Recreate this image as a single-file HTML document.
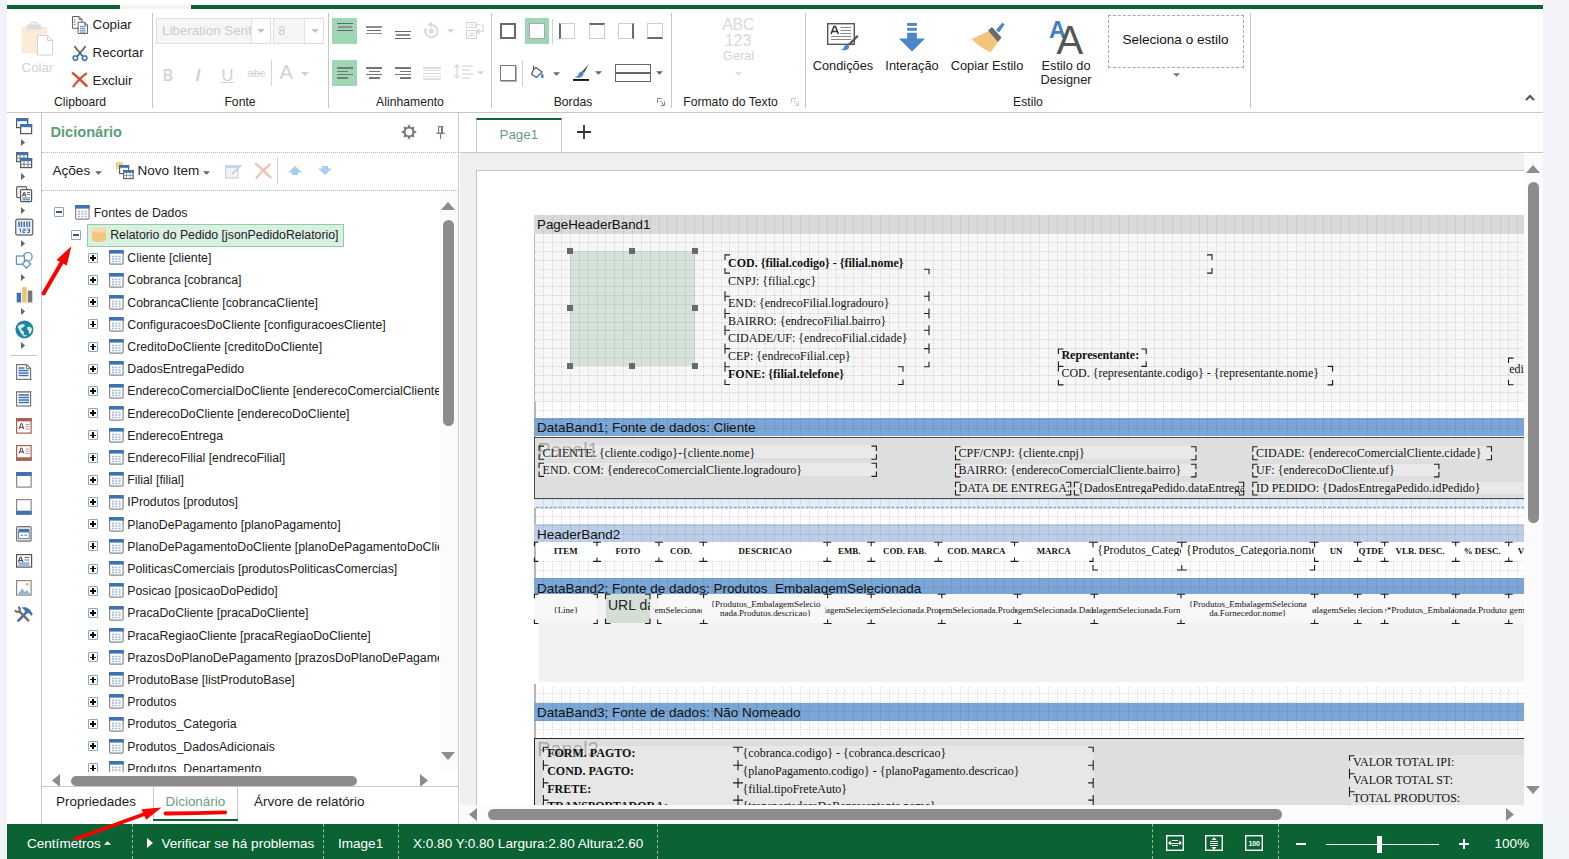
<!DOCTYPE html>
<html lang="pt-BR"><head><meta charset="utf-8"><title>Designer</title>
<style>
*{box-sizing:border-box}
html,body{margin:0;padding:0}
body{width:1569px;height:859px;position:relative;overflow:hidden;background:#f1f3f8;font-family:"Liberation Sans",sans-serif;color:#222;font-size:13.33px}
.a{position:absolute}
.t{position:absolute;white-space:pre;line-height:1}
.c{transform:translateX(-50%)}
svg{position:absolute;overflow:visible}
.sep{position:absolute;width:1px;background:#c6c6c6;top:13px;height:95px}
.gl{position:absolute;white-space:pre;font-size:12.2px;line-height:12px;top:95.6px;transform:translateX(-50%);color:#222}
.rb{position:absolute;white-space:pre;font-size:13.33px;line-height:14px;color:#222}
.tr{position:absolute;white-space:pre;font-size:12.3px;line-height:14px;color:#222}
.st{position:absolute;white-space:pre;font-size:13.55px;line-height:14px;color:#fff;top:836.5px}
.sv{position:absolute;top:824px;height:35px;width:0;border-left:1px dashed rgba(255,255,255,.55)}
.rt{position:absolute;white-space:pre;font-family:"Liberation Serif",serif;font-size:11.93px;line-height:12px;color:#111}
.bh{position:absolute;left:534px;width:1000px;white-space:pre;font-size:13.5px;line-height:18px;padding-left:3px;padding-top:1.2px;color:#111;overflow:hidden}
</style></head><body>
<div class="a" style="left:7px;top:0;width:1536px;height:859px;background:#fff"></div><div class="a" style="left:7px;top:5px;width:113px;height:4px;background:#0b6333"></div><div class="a" style="left:191px;top:5px;width:1352px;height:4px;background:#0b6333"></div><div class="a" style="left:120px;top:5px;width:71px;height:4px;background:#f4f4f4"></div><div class="a" style="left:7px;top:112px;width:1536px;height:1px;background:#c8c8c8"></div>
<!-- s_ribbon -->
<svg style="left:21px;top:22px" width="33" height="34" viewBox="0 0 33 34">
<rect x="0.5" y="4.5" width="26" height="27" rx="1.5" fill="#fbebd8"/>
<rect x="6" y="2.5" width="14" height="5" rx="1" fill="#dcdcdc"/><rect x="10" y="0.5" width="6" height="4" rx="1.5" fill="none" stroke="#dcdcdc" stroke-width="1.6"/>
<path d="M16.5 13.5h10l5 5v14.5h-15z" fill="#fff" stroke="#d2d2d6" stroke-width="1"/><path d="M26.5 13.5v5h5" fill="none" stroke="#d2d2d6"/>
</svg>
<div class="rb c" style="left:37.5px;top:61px;color:#d6d0d8">Colar</div>
<svg style="left:72px;top:15.500px" width="16" height="18" viewBox="0 0 17 19">
<path d="M0.5 0.5h7l3 3v9.5h-10z" fill="#fff" stroke="#555"/><path d="M7.5 0.5v3h3" fill="none" stroke="#555"/>
<path d="M2 4h1.5M2 6.5h1.5M2 9h1.5" stroke="#4a7ebb" stroke-width="1.2"/>
<path d="M6.5 6.5h7l3 3v9h-10z" fill="#fff" stroke="#555"/><path d="M13.5 6.5v3h3" fill="none" stroke="#555"/>
<path d="M8.5 11h6M8.5 13h6M8.5 15h6M8.5 17h6" stroke="#4a7ebb" stroke-width="1"/>
</svg>
<div class="rb" style="left:92.500px;top:17.500px">Copiar</div>
<svg style="left:72px;top:45.500px" width="16" height="15.500" viewBox="0 0 17 16">
<path d="M3 0.5L11.5 11M14 0.5L5.5 11" stroke="#5a5a5a" stroke-width="1.8" fill="none" stroke-linecap="round"/>
<circle cx="3.6" cy="12.6" r="2.4" fill="none" stroke="#3f7fc4" stroke-width="1.8"/><circle cx="13.4" cy="12.6" r="2.4" fill="none" stroke="#3f7fc4" stroke-width="1.8"/>
</svg>
<div class="rb" style="left:92.500px;top:45.500px">Recortar</div>
<svg style="left:72px;top:72.300px" width="16" height="15.500" viewBox="0 0 17 16">
<path d="M1 1C5 4 10 9 15.5 14.5" stroke="#d4502f" stroke-width="2.6" fill="none" stroke-linecap="round"/>
<path d="M15 1.5C10 5 5 10 1.5 15" stroke="#d4502f" stroke-width="2.4" fill="none" stroke-linecap="round"/>
</svg>
<div class="rb" style="left:92.500px;top:73.500px">Excluir</div>
<div class="gl" style="left:80px">Clipboard</div>
<div class="sep" style="left:152px"></div>
<div class="a" style="left:156px;top:18px;width:115px;height:26px;border:1px solid #dedede;background:#fff"></div>
<div class="a" style="left:157px;top:19px;width:95px;height:24px;background:#f6f6f6;border-right:1px solid #e2e2e2;overflow:hidden"><div class="rb" style="left:5px;top:4.600px;color:#cbcbcb">Liberation Serif</div></div>
<svg style="left:257px;top:29px" width="8" height="4" viewBox="0 0 8 4"><path d="M0 0h8l-4 4z" fill="#c4c4c4"/></svg>
<div class="a" style="left:272.800px;top:18px;width:51px;height:26px;border:1px solid #dedede;background:#fff"></div>
<div class="a" style="left:273.800px;top:19px;width:31px;height:24px;background:#f6f6f6;border-right:1px solid #e2e2e2;overflow:hidden"><div class="rb" style="left:4.500px;top:4.600px;color:#cbcbcb">8</div></div>
<svg style="left:310.5px;top:29px" width="8" height="4" viewBox="0 0 8 4"><path d="M0 0h8l-4 4z" fill="#c4c4c4"/></svg>
<div class="t" style="left:162.500px;top:65.300px;font:bold 17.400px 'Liberation Sans',sans-serif;color:#d4d4d4;transform:scaleX(.8);transform-origin:left">B</div>
<div class="t" style="left:195.500px;top:65.300px;font:italic bold 17.400px 'Liberation Sans',sans-serif;color:#d4d4d4">I</div>
<div class="t" style="left:221.500px;top:65.500px;font:16.500px 'Liberation Sans',sans-serif;color:#d2d2d2;text-decoration:underline">U</div>
<div class="t" style="left:247.5px;top:67px;font:11px 'Liberation Sans',sans-serif;color:#d2d2d2;text-decoration:line-through">abc</div>
<div class="a" style="left:271px;top:60px;width:1px;height:26px;background:#d4d4d4"></div>
<div class="t" style="left:279.5px;top:61px;font:20px 'Liberation Sans',sans-serif;color:#d2d2d2">A</div>
<svg style="left:300.5px;top:72px" width="8" height="4" viewBox="0 0 8 4"><path d="M0 0h8l-4 4z" fill="#d0d0d0"/></svg>
<div class="gl" style="left:240px">Fonte</div>
<div class="sep" style="left:328px"></div>
<div class="a" style="left:332px;top:18px;width:25px;height:26px;background:#9fd6b4"></div>
<div class="a" style="left:332px;top:60px;width:25px;height:26px;background:#9fd6b4"></div>
<div class="a" style="left:337.0px;top:22.9px;width:16px;height:1.400px;background:#666"></div><div class="a" style="left:338.2px;top:26.3px;width:13.5px;height:1.400px;background:#8e8e8e"></div><div class="a" style="left:337.0px;top:29.6px;width:16px;height:1.400px;background:#666"></div>
<div class="a" style="left:366.0px;top:26.3px;width:16px;height:1.400px;background:#8e8e8e"></div><div class="a" style="left:366.8px;top:29.6px;width:14.5px;height:1.400px;background:#666"></div><div class="a" style="left:366.0px;top:33.0px;width:16px;height:1.400px;background:#8e8e8e"></div>
<div class="a" style="left:395.0px;top:30.8px;width:16px;height:1.400px;background:#666"></div><div class="a" style="left:396.2px;top:34.3px;width:13.5px;height:1.400px;background:#8e8e8e"></div><div class="a" style="left:395.0px;top:37.6px;width:16px;height:1.400px;background:#666"></div>
<svg style="left:423px;top:21px" width="17" height="18" viewBox="0 0 17 18"><path d="M8.300 3.800A6.200 6.200 0 1 1 2.600 7.500" fill="none" stroke="#cbdbea" stroke-width="1.800"/><path d="M4.500 3.500L9 0.500v6z" fill="#cbdbea"/><circle cx="8.300" cy="10" r="2.600" fill="#cde3d4"/><path d="M1 8.500h3M1 11h2.500" stroke="#cbdbea" stroke-width="1"/></svg>
<svg style="left:447px;top:29px" width="7" height="4" viewBox="0 0 8 4"><path d="M0 0h8l-4 4z" fill="#d0d0d0"/></svg>
<svg style="left:466px;top:22px" width="18" height="17" viewBox="0 0 18 17"><rect x="0.500" y="0.500" width="10" height="5" fill="#fff" stroke="#d6d6d6"/><rect x="0.500" y="8.500" width="10" height="8" fill="#fff" stroke="#d6d6d6"/><path d="M2.500 3h12M2.500 11.500h6M2.500 13.500h6" stroke="#c9dbee" stroke-width="1"/><path d="M15.500 3h1.500v6.500h-5" fill="none" stroke="#c9dbee" stroke-width="1.200"/><path d="M14 7l-3 2.500 3 2.500" fill="none" stroke="#c9dbee" stroke-width="1.200"/></svg>
<div class="a" style="left:337.0px;top:67.2px;width:16px;height:1.400px;background:#6f7f75"></div><div class="a" style="left:337.0px;top:70.6px;width:11px;height:1.400px;background:#6f7f75"></div><div class="a" style="left:337.0px;top:73.9px;width:16px;height:1.400px;background:#6f7f75"></div><div class="a" style="left:337.0px;top:77.3px;width:11px;height:1.400px;background:#6f7f75"></div>
<div class="a" style="left:366.0px;top:67.2px;width:16px;height:1.400px;background:#777"></div><div class="a" style="left:368.5px;top:70.6px;width:11px;height:1.400px;background:#777"></div><div class="a" style="left:366.0px;top:73.9px;width:16px;height:1.400px;background:#777"></div><div class="a" style="left:368.5px;top:77.3px;width:11px;height:1.400px;background:#777"></div>
<div class="a" style="left:395.0px;top:67.2px;width:16px;height:1.400px;background:#777"></div><div class="a" style="left:400.0px;top:70.6px;width:11px;height:1.400px;background:#777"></div><div class="a" style="left:395.0px;top:73.9px;width:16px;height:1.400px;background:#777"></div><div class="a" style="left:400.0px;top:77.3px;width:11px;height:1.400px;background:#777"></div>
<div class="a" style="left:423px;top:67.1px;width:18px;height:1.600px;background:#e0e0e0"></div><div class="a" style="left:423px;top:69.9px;width:18px;height:1.600px;background:#e0e0e0"></div><div class="a" style="left:423px;top:72.7px;width:18px;height:1.600px;background:#e0e0e0"></div><div class="a" style="left:423px;top:75.5px;width:18px;height:1.600px;background:#e0e0e0"></div><div class="a" style="left:423px;top:78.3px;width:18px;height:1.600px;background:#e0e0e0"></div>
<svg style="left:454px;top:64px" width="20" height="16" viewBox="0 0 20 16"><path d="M3 1v13M0.5 3.5L3 1l2.5 2.5M0.5 11.5L3 14l2.5-2.5" fill="none" stroke="#cddcec" stroke-width="1.300"/><path d="M8 2h11M8 6h8M8 10h11M8 14h8" stroke="#e0e0e0" stroke-width="1.400"/></svg>
<svg style="left:476.5px;top:71px" width="7" height="4" viewBox="0 0 8 4"><path d="M0 0h8l-4 4z" fill="#d6d6d6"/></svg>
<div class="gl" style="left:410px">Alinhamento</div>
<div class="sep" style="left:491px"></div>
<div class="a" style="left:500px;top:23px;width:16px;height:16px;border:2.300px solid #686868;background:#fff"></div>
<div class="a" style="left:525px;top:18px;width:24px;height:26px;background:#9fd6b4"></div>
<div class="a" style="left:529px;top:23px;width:16px;height:16px;border:1.500px solid #a9a9a9;background:#fbfbfb"></div>
<div class="a" style="left:552px;top:19px;width:1px;height:25px;background:#d0d0d0"></div>
<div class="a" style="left:559px;top:23px;width:16px;height:16px;border:1px solid #cdcdcd;border-left:2.300px solid #6a6a6a;background:#fff"></div>
<div class="a" style="left:589px;top:23px;width:16px;height:16px;border:1px solid #cdcdcd;border-top:2.300px solid #6a6a6a;background:#fff"></div>
<div class="a" style="left:618px;top:23px;width:16px;height:16px;border:1px solid #cdcdcd;border-right:2.300px solid #6a6a6a;background:#fff"></div>
<div class="a" style="left:647px;top:23px;width:16px;height:16px;border:1px solid #cdcdcd;border-bottom:2.300px solid #6a6a6a;background:#fff"></div>
<div class="a" style="left:500px;top:65px;width:16px;height:16px;border:1.800px solid #787878;background:#fff;box-shadow:1px 1px 0 #b5b5b5"></div>
<div class="a" style="left:522px;top:60px;width:1px;height:26px;background:#d0d0d0"></div>
<svg style="left:530px;top:64px" width="15" height="15" viewBox="0 0 15 15"><path d="M3.5 1.5v4M3.5 5.5l-2 4.5 5 3.5 5.5-5.5-6-4.5z" fill="#fff" stroke="#555" stroke-width="1.1" stroke-linejoin="round"/><path d="M12.2 9c1 1.6 1.6 2.6 1.6 3.4a1.5 1.5 0 0 1-3 0c0-.8.5-1.8 1.4-3.4z" fill="#4a86c8"/></svg>
<svg style="left:552.500px;top:71.500px" width="7" height="4" viewBox="0 0 8 4"><path d="M0 0h8l-4 4z" fill="#666"/></svg>
<svg style="left:573px;top:63px" width="17" height="19" viewBox="0 0 17 19"><path d="M16 1L9 8.5l2 1.5z" fill="#555"/><path d="M8.5 8.5c-2 .5-3 2-3.5 4-.6 1-2 1.6-3.6 1.4 3 1.6 6.6 1 8.6-1.4.9-1.2.6-2.6-.2-3.400z" fill="#4a86c8"/><rect x="0" y="16" width="16" height="1.900" fill="#111"/></svg>
<svg style="left:594.5px;top:71px" width="7" height="4" viewBox="0 0 8 4"><path d="M0 0h8l-4 4z" fill="#666"/></svg>
<div class="a" style="left:615px;top:64px;width:36px;height:18px;border:1.4px solid #666;background:#fff"></div>
<div class="a" style="left:615px;top:72.3px;width:36px;height:1.4px;background:#666"></div>
<svg style="left:656px;top:71px" width="7" height="4" viewBox="0 0 8 4"><path d="M0 0h8l-4 4z" fill="#666"/></svg>
<div class="gl" style="left:573px">Bordas</div>
<svg style="left:657px;top:98px" width="8" height="8" viewBox="0 0 8 8"><path d="M0.5 5V0.5H5" fill="none" stroke="#888"/><path d="M3 3l4 4M7.5 3.5v4h-4" fill="none" stroke="#888"/></svg>
<div class="sep" style="left:671px"></div>
<div class="t c" style="left:738px;top:17.300px;font-size:16px;color:#dadada;letter-spacing:-.4px">ABC</div>
<div class="t c" style="left:738px;top:33px;font-size:16px;color:#dadada">123</div>
<div class="t c" style="left:738.500px;top:50px;font-size:12.800px;color:#d4d4d8">Geral</div>
<svg style="left:734.5px;top:72px" width="7" height="4" viewBox="0 0 8 4"><path d="M0 0h8l-4 4z" fill="#dcdcdc"/></svg>
<div class="gl" style="left:730.5px">Formato do Texto</div>
<svg style="left:790.5px;top:98px" width="8" height="8" viewBox="0 0 8 8"><path d="M0.5 5V0.5H5" fill="none" stroke="#ccc"/><path d="M3 3l4 4M7.5 3.5v4h-4" fill="none" stroke="#ccc"/></svg>
<div class="sep" style="left:805px"></div>
<svg style="left:827px;top:23px" width="32" height="29" viewBox="0 0 32 29">
<rect x="0.7" y="0.7" width="26.6" height="20.6" fill="#fff" stroke="#555" stroke-width="1.4"/>
<path d="M4 11L7 3.500h1.400L11.400 11M5 8.500h5.400" fill="none" stroke="#333" stroke-width="1.5"/>
<path d="M13.500 4.500h10.500M13.500 7.500h10.500M13.500 10.500h10.500M4 13.500h20M4 16.500h20" stroke="#8a8a8a" stroke-width="1.2"/>
<path d="M30 12l1.600 1.600-8.600 9-2-1.600z" fill="#555"/>
<path d="M20.500 21.500c-2 .2-3.400 1.400-3.800 3.200-.4 1.200-1.800 1.800-3.400 1.600 3.200 1.800 7 1.200 8.600-1.400.8-1.200.2-2.600-1.400-3.400z" fill="#4a86c8"/>
</svg>
<div class="rb c" style="left:843px;top:58.500px;font-size:12.800px">Condições</div>
<svg style="left:898px;top:23.200px" width="28" height="29" viewBox="0 0 28 30">
<rect x="9" y="0" width="10" height="3" fill="#4a86c8"/><rect x="9" y="5" width="10" height="3" fill="#4a86c8"/>
<path d="M9 10h10v6h8.500L14 29.500 0.500 16H9z" fill="#4a86c8"/></svg>
<div class="rb c" style="left:912px;top:58.500px;font-size:12.800px">Interação</div>
<svg style="left:971px;top:22px" width="34" height="31" viewBox="0 0 34 31">
<path d="M0.500 17L18 9l9 11-7.500 10.500C13 27 6 23 0.500 17z" fill="#f2c57c"/>
<path d="M17 8.500l4-3.500 9.500 10.500-3.500 4.500z" fill="#6a6a6a"/>
<path d="M25 8l6.500-7.500 2 2L28 10.500z" fill="#4a86c8"/></svg>
<div class="rb c" style="left:987px;top:58.500px;font-size:12.800px">Copiar Estilo</div>
<div class="t" style="left:1049px;top:19.300px;font-size:23.500px;color:#3f7fc4;font-weight:bold">A</div>
<div class="t" style="left:1056.500px;top:19.500px;font-size:40px;color:#555">A</div>
<div class="rb c" style="left:1066px;top:58.500px;text-align:center;line-height:14px;font-size:12.800px">Estilo do
Designer</div>
<div class="a" style="left:1108px;top:15px;width:136px;height:53px;border:1px dashed #a8a8a8"></div>
<div class="rb c" style="left:1175.500px;top:33.400px;color:#111;font-size:13.560px">Seleciona o estilo</div>
<svg style="left:1172.500px;top:73px" width="7" height="4" viewBox="0 0 8 4"><path d="M0 0h8l-4 4z" fill="#777"/></svg>
<div class="gl" style="left:1028px">Estilo</div>
<div class="sep" style="left:1250px"></div>
<svg style="left:1525px;top:94px" width="10" height="7" viewBox="0 0 10 7"><path d="M1 6l4-4 4 4" fill="none" stroke="#555" stroke-width="2"/></svg>
<!-- s_left -->
<div class="a" style="left:40.5px;top:113px;width:1px;height:711px;background:#c8c8c8"></div>
<svg style="left:15.500px;top:117.5px" width="17" height="17" viewBox="0 0 17 17"><rect x="0.6" y="0.6" width="11" height="9" fill="#fff" stroke="#555" stroke-width="1.2"/><rect x="0" y="0" width="12.2" height="3.2" fill="#3f72b0"/><rect x="4.600" y="6.600" width="11" height="9" fill="#fff" stroke="#555" stroke-width="1.2"/><rect x="4" y="6" width="12.2" height="3.2" fill="#3f72b0"/></svg>
<svg style="left:21px;top:139.0px" width="4" height="7" viewBox="0 0 4 7"><path d="M0 0l4 3.500-4 3.500z" fill="#666"/></svg>
<svg style="left:15.500px;top:151.5px" width="17" height="17" viewBox="0 0 17 17"><rect x="0.6" y="0.6" width="11" height="9" fill="#fff" stroke="#555" stroke-width="1.2"/><rect x="0" y="0" width="12.2" height="3.2" fill="#3f72b0"/><path d="M0 6h12M4 3v7M8 3v7" stroke="#777" stroke-width=".9"/><rect x="4.600" y="6.600" width="11" height="9" fill="#fff" stroke="#555" stroke-width="1.2"/><rect x="4" y="6" width="12.2" height="3.2" fill="#3f72b0"/><path d="M4 12.300h12M8 9v7M12 9v7" stroke="#777" stroke-width=".9"/></svg>
<svg style="left:21px;top:172.8px" width="4" height="7" viewBox="0 0 4 7"><path d="M0 0l4 3.500-4 3.500z" fill="#666"/></svg>
<svg style="left:15.500px;top:185.5px" width="17" height="17" viewBox="0 0 17 17"><rect x="0.6" y="0.6" width="10" height="11" rx="1" fill="#eee" stroke="#666" stroke-width="1.2"/><rect x="4.600" y="3.600" width="11" height="12" rx="1" fill="#fff" stroke="#555" stroke-width="1.2"/><path d="M6.500 10.500l1.300-4h.9l1.300 4M7 9h2.400" stroke="#333" stroke-width=".9" fill="none"/><path d="M11 6.500h3M11 8.500h3M6.500 12h7.500M6.500 13.800h7.500" stroke="#3f72b0" stroke-width="1"/></svg>
<svg style="left:21px;top:206.6px" width="4" height="7" viewBox="0 0 4 7"><path d="M0 0l4 3.500-4 3.500z" fill="#666"/></svg>
<svg style="left:15.500px;top:217.8px" width="17" height="17" viewBox="0 0 17 17"><rect x="-0.300" y="1.200" width="17" height="15.800" rx="1.800" fill="#edf2f9" stroke="#777" stroke-width="1.400"/><path d="M3 3.500v5.500M5.500 3.500v5.500M8.200 3.500v5.500M11 3.500v5.500M13.500 3.500v5.500" stroke="#3f72b0" stroke-width="1.500"/><path d="M3 11h1.500v3.500M6.800 11h2.400v1.700H6.800v1.800h2.400M11.200 11h2.300v3.500h-2.300M11.500 12.700h2" stroke="#3f72b0" stroke-width="1" fill="none"/></svg>
<svg style="left:21px;top:240.4px" width="4" height="7" viewBox="0 0 4 7"><path d="M0 0l4 3.500-4 3.500z" fill="#666"/></svg>
<svg style="left:15.500px;top:251px" width="17" height="17" viewBox="0 0 17 17"><circle cx="11.800" cy="5.800" r="4.300" fill="#fff" stroke="#5b8fc7" stroke-width="1.200"/><rect x="0.400" y="5" width="8" height="8.300" fill="#fff" stroke="#5b8fc7" stroke-width="1.200"/><path d="M10.500 8.800l4.200 4.200-4.200 4.200-4.200-4.200z" fill="#fff" stroke="#5b8fc7" stroke-width="1.200"/></svg>
<svg style="left:21px;top:274.2px" width="4" height="7" viewBox="0 0 4 7"><path d="M0 0l4 3.500-4 3.500z" fill="#666"/></svg>
<svg style="left:15.500px;top:287px" width="17" height="17" viewBox="0 0 17 17"><rect x="0.700" y="5.800" width="4.400" height="9.600" fill="#3f72b0"/><rect x="6.200" y="0.100" width="4.500" height="15.300" fill="#efc270"/><rect x="11.800" y="3.600" width="4.500" height="11.800" fill="#777"/></svg>
<svg style="left:21px;top:308.0px" width="4" height="7" viewBox="0 0 4 7"><path d="M0 0l4 3.500-4 3.500z" fill="#666"/></svg>
<svg style="left:15.500px;top:320.5px" width="17" height="17" viewBox="0 0 17 17"><circle cx="8.400" cy="8.400" r="9" fill="#1c86a4"/><path d="M2.500 4.500c2.500-1.500 5-2 6-1s-.5 2.800-2.200 3.300-1 2.700.500 3.200 1.700 2.300.6 4c-2.200-.6-3.300-2.800-3.800-4.400S.8 6 2.500 4.500z" fill="#d8eee6"/><path d="M11.500 6c1.700-.6 3.500 0 4.500 1.700 0 2.300-1.200 4.500-2.800 5.600-.6-1.200 0-2.300-.6-3.400s-2.200-2.200-1.100-3.900z" fill="#d8eee6"/><path d="M6 14.500c1.500-.5 3.500-.8 5 0-1.500 1.200-3.500 1.200-5 0z" fill="#d8eee6"/></svg>
<svg style="left:21px;top:341.8px" width="4" height="7" viewBox="0 0 4 7"><path d="M0 0l4 3.500-4 3.500z" fill="#666"/></svg>
<div class="a" style="left:10px;top:355px;width:27px;height:1px;background:#c8c8c8"></div>
<svg style="left:16px;top:364px" width="16" height="16" viewBox="0 0 16 16"><path d="M0.600 0.600h10l4 4v10.800h-14z" fill="#fff" stroke="#777" stroke-width="1.200"/><path d="M10.500 0.600v4h4" fill="none" stroke="#777"/><path d="M2.500 4h6M2.500 6.500h10M2.500 9h10M2.500 11.500h10" stroke="#3f72b0" stroke-width="1.300"/><path d="M0 15.500h15.500" stroke="#777" stroke-dasharray="1.500 1"/></svg>
<svg style="left:16px;top:391px" width="16" height="16" viewBox="0 0 16 16"><rect x="0.600" y="1" width="14" height="14" fill="#fff" stroke="#777" stroke-width="1.200"/><path d="M0 0.600h15.500" stroke="#777" stroke-dasharray="1.500 1"/><path d="M2.500 4h10.500M2.500 6.500h10.500M2.500 9h10.500M2.500 11.500h10.500" stroke="#3f72b0" stroke-width="1.300"/></svg>
<svg style="left:16px;top:418px" width="16" height="16" viewBox="0 0 16 16"><rect x="0.600" y="0.600" width="14.500" height="14.500" fill="#fff" stroke="#a9604f" stroke-width="1.200"/><rect x="0" y="0" width="15.700" height="3.400" fill="#a9604f"/><path d="M3 11l2-5.500h.8L7.800 11M3.600 9.300h3.500" stroke="#444" stroke-width="1" fill="none"/><path d="M9.500 6.500h4M9.500 8.700h4M9.500 11h4" stroke="#c9938c" stroke-width="1"/></svg>
<svg style="left:16px;top:445px" width="16" height="16" viewBox="0 0 16 16"><rect x="0.600" y="0.600" width="14.500" height="14.500" fill="#fff" stroke="#a9604f" stroke-width="1.200"/><rect x="0" y="12.300" width="15.700" height="3.400" fill="#a9604f"/><path d="M3 8.500l2-5.500h.8L7.800 8.500M3.600 6.800h3.500" stroke="#444" stroke-width="1" fill="none"/><path d="M9.500 4h4M9.500 6.200h4M9.500 8.500h4" stroke="#c9938c" stroke-width="1"/></svg>
<svg style="left:16px;top:472px" width="16" height="16" viewBox="0 0 16 16"><rect x="0.600" y="0.600" width="14.500" height="14.500" fill="#fff" stroke="#888" stroke-width="1.200"/><rect x="0" y="0" width="15.700" height="4" fill="#3f72b0"/></svg>
<svg style="left:16px;top:499px" width="16" height="16" viewBox="0 0 16 16"><rect x="0.600" y="0.600" width="14.500" height="14.500" fill="#fff" stroke="#888" stroke-width="1.200"/><rect x="0" y="11.700" width="15.700" height="4" fill="#3f72b0"/></svg>
<svg style="left:16px;top:526px" width="16" height="16" viewBox="0 0 16 16"><rect x="0.600" y="0.600" width="14.500" height="14.500" rx="1" fill="#e4e4e4" stroke="#777" stroke-width="1.200"/><rect x="2.500" y="3" width="10.700" height="3" fill="#3f72b0"/><rect x="2.500" y="6" width="10.700" height="6.500" fill="#fff" stroke="#3f72b0" stroke-width=".8"/><path d="M4.500 9.200h2.500M8.500 9.200h2.500" stroke="#3f72b0"/></svg>
<svg style="left:16px;top:553px" width="16" height="16" viewBox="0 0 16 16"><rect x="0.600" y="1.600" width="15" height="12.500" fill="#fff" stroke="#555" stroke-width="1.200"/><path d="M2.500 9l1.800-5h.8l1.800 5M3 7.400h3.400" stroke="#333" stroke-width="1" fill="none"/><path d="M8.500 4.500h5M8.500 7h5M2.500 10h11M2.500 12h11" stroke="#3f72b0" stroke-width="1.100"/></svg>
<svg style="left:16px;top:580px" width="16" height="16" viewBox="0 0 16 16"><rect x="0.600" y="0.600" width="14.500" height="14.500" fill="#fff" stroke="#888" stroke-width="1.200"/><path d="M1.500 14.500l4.500-6 3 3.500 2-2 3.500 4.500z" fill="#8fb4dc"/><circle cx="11.300" cy="4.300" r="1.700" fill="#efc270"/></svg>
<svg style="left:10px;top:600px" width="30" height="30" viewBox="0 0 30 30"><path d="M8.400 20.600L14.500 14.500" stroke="#3f72b0" stroke-width="2.700" stroke-linecap="round"/><path d="M11.900 7.300L16 7.300L20 9.800L22.800 14L21.300 15.900L19.300 13.300L17 13.500L15.200 15.200L13.700 13.700L15 11.600L14 9.300L12.500 8.500z" fill="#3f72b0"/><path d="M9.300 11.300L18.300 20.300" stroke="#707070" stroke-width="2.500" stroke-linecap="round"/><path d="M7.900 7.300A2.300 2.300 0 1 1 5.300 9.900" fill="none" stroke="#707070" stroke-width="2"/></svg>
<div class="a" style="left:458px;top:113px;width:1px;height:711px;background:#cdcdcd"></div>
<div class="t" style="left:50.500px;top:124.500px;font-size:14.600px;font-weight:bold;color:#5d9d7c">Dicionário</div>
<svg style="left:0;top:0" width="460" height="200" viewBox="0 0 460 200"><path d="M409.00 124.20L410.91 127.38L414.52 126.48L413.62 130.09L416.80 132.00L413.62 133.91L414.52 137.52L410.91 136.62L409.00 139.80L407.09 136.62L403.48 137.52L404.38 133.91L401.20 132.00L404.38 130.09L403.48 126.48L407.09 127.38zM412.400 132a3.400 3.400 0 1 0 -6.800 0a3.400 3.400 0 1 0 6.800 0z" fill="#757575" fill-rule="evenodd"/></svg>
<svg style="left:436px;top:126px" width="9" height="13" viewBox="0 0 9 13"><path d="M2.200 0.600h4.800M2.600 0.600v6.500M6.200 0.600v6.500" fill="none" stroke="#777" stroke-width="1.100"/><rect x="5" y="0.600" width="1.800" height="6.500" fill="#777"/><path d="M0.400 7.300h8.300" stroke="#777" stroke-width="1.300"/><path d="M4.500 7.500v5.500" stroke="#777" stroke-width="1.100"/></svg>
<div class="a" style="left:42px;top:152px;width:416px;height:0;border-top:1px dotted #b8b8b8"></div>
<div class="a" style="left:42px;top:190px;width:416px;height:0;border-top:1px dotted #b8b8b8"></div>
<div class="rb" style="left:52.500px;top:164px;font-size:13.550px">Ações</div>
<svg style="left:95px;top:170.500px" width="7" height="4" viewBox="0 0 8 4"><path d="M0 0h8l-4 4z" fill="#666"/></svg>
<svg style="left:116px;top:162px" width="18" height="17" viewBox="0 0 18 17"><rect x="0" y="0" width="7" height="7" fill="#f3cf8a"/><rect x="3.600" y="3.600" width="9" height="8" fill="#fff" stroke="#555" stroke-width="1.100"/><rect x="3" y="3" width="10.200" height="2.800" fill="#3f72b0"/><rect x="7.600" y="8.600" width="9.500" height="8" fill="#fff" stroke="#555" stroke-width="1.100"/><rect x="7" y="8" width="10.700" height="2.800" fill="#3f72b0"/><path d="M7 13.500h10.500M10.500 11v6M14 11v6" stroke="#888" stroke-width=".8"/></svg>
<div class="rb" style="left:137.500px;top:164px;font-size:13.550px">Novo Item</div>
<svg style="left:203px;top:170.500px" width="7" height="4" viewBox="0 0 8 4"><path d="M0 0h8l-4 4z" fill="#666"/></svg>
<svg style="left:225px;top:163px" width="17" height="16" viewBox="0 0 17 16"><rect x="0.600" y="2.600" width="12.500" height="12.500" fill="#eef2f7" stroke="#cfd6df" stroke-width="1.200"/><path d="M0 2h13.700v3H0z" fill="#c3d5ea"/><path d="M15.500 1.500l1.200 1.200-8 8.300-2.200.9.800-2.200z" fill="#c9cfd8"/></svg>
<svg style="left:255px;top:163px" width="17" height="16" viewBox="0 0 17 16"><path d="M1 1C5 4 10 9 15.500 14.500" stroke="#f0c2b4" stroke-width="2.400" fill="none" stroke-linecap="round"/><path d="M15 1.500C10 5 5 10 1.500 15" stroke="#f0c2b4" stroke-width="2.200" fill="none" stroke-linecap="round"/></svg>
<div class="a" style="left:277px;top:158px;width:1px;height:26px;background:#d0d0d0"></div>
<svg style="left:288px;top:166px" width="14" height="9" viewBox="0 0 14 9"><path d="M7 0l7 6.500H10V9H4V6.500H0z" fill="#a9cdf0"/></svg>
<svg style="left:318px;top:166px" width="14" height="9" viewBox="0 0 14 9"><path d="M7 9l7-6.500H10V0H4v2.500H0z" fill="#a9cdf0"/></svg>
<div class="a" style="left:42px;top:196px;width:397px;height:575.800px;overflow:hidden">
<div class="a" style="left:12.0px;top:11.2px;width:10px;height:10px;border:1.200px solid #8ba5c6;background:#fff;border-radius:1px"></div><div class="a" style="left:14.0px;top:15.4px;width:6px;height:1.500px;background:#555"></div>
<svg style="left:33.0px;top:8.7px" width="15" height="15" viewBox="0 0 15 15"><rect x="0.600" y="0.600" width="13.500" height="13.500" rx="1" fill="#fff" stroke="#8a8a8a" stroke-width="1.200"/><rect x="0" y="0" width="14.700" height="3.600" fill="#3f72b0"/><path d="M3 6.500h2M6.300 6.500h2M9.600 6.500h2M3 9h2M6.300 9h2M9.600 9h2M3 11.500h2M6.300 11.500h2M9.600 11.500h2" stroke="#9db7d9" stroke-width="1.400"/></svg>
<div class="tr" style="left:51.8px;top:9.6px">Fontes de Dados</div>
<div class="a" style="left:29.0px;top:33.9px;width:10px;height:10px;border:1.200px solid #8ba5c6;background:#fff;border-radius:1px"></div><div class="a" style="left:31.0px;top:38.1px;width:6px;height:1.500px;background:#555"></div>
<div class="a" style="left:45px;top:28px;width:256.500px;height:22.500px;border:1px solid #8fcfa6;background:#d9f0e1"></div>
<svg style="left:49.5px;top:30.9px" width="14" height="15" viewBox="0 0 14 15"><path d="M0 3v9.500c0 1.400 3 2.500 7 2.500s7-1.100 7-2.500V3z" fill="#f3c77f"/><ellipse cx="7" cy="3" rx="7" ry="2.800" fill="#f8dba9"/></svg>
<div class="tr" style="left:68.2px;top:31.8px">Relatorio do Pedido [jsonPedidoRelatorio]</div>
<div class="a" style="left:46.0px;top:56.8px;width:10px;height:10px;border:1.200px solid #8ba5c6;background:#fff;border-radius:1px"></div><div class="a" style="left:48.0px;top:61.0px;width:6px;height:1.500px;background:#111"></div><div class="a" style="left:50.2px;top:58.8px;width:1.500px;height:6px;background:#111"></div>
<svg style="left:66.5px;top:54.3px" width="15" height="15" viewBox="0 0 15 15"><rect x="0.600" y="0.600" width="13.500" height="13.500" rx="1" fill="#fff" stroke="#8a8a8a" stroke-width="1.200"/><rect x="0" y="0" width="14.700" height="3.600" fill="#3f72b0"/><path d="M3 6.500h2M6.300 6.500h2M9.600 6.500h2M3 9h2M6.300 9h2M9.600 9h2M3 11.500h2M6.300 11.500h2M9.600 11.500h2" stroke="#9db7d9" stroke-width="1.400"/></svg>
<div class="tr" style="left:85.3px;top:55.2px">Cliente [cliente]</div>
<div class="a" style="left:46.0px;top:79.0px;width:10px;height:10px;border:1.200px solid #8ba5c6;background:#fff;border-radius:1px"></div><div class="a" style="left:48.0px;top:83.2px;width:6px;height:1.500px;background:#111"></div><div class="a" style="left:50.2px;top:81.0px;width:1.500px;height:6px;background:#111"></div>
<svg style="left:66.5px;top:76.5px" width="15" height="15" viewBox="0 0 15 15"><rect x="0.600" y="0.600" width="13.500" height="13.500" rx="1" fill="#fff" stroke="#8a8a8a" stroke-width="1.200"/><rect x="0" y="0" width="14.700" height="3.600" fill="#3f72b0"/><path d="M3 6.500h2M6.300 6.500h2M9.600 6.500h2M3 9h2M6.300 9h2M9.600 9h2M3 11.500h2M6.300 11.500h2M9.600 11.500h2" stroke="#9db7d9" stroke-width="1.400"/></svg>
<div class="tr" style="left:85.3px;top:77.4px">Cobranca [cobranca]</div>
<div class="a" style="left:46.0px;top:101.2px;width:10px;height:10px;border:1.200px solid #8ba5c6;background:#fff;border-radius:1px"></div><div class="a" style="left:48.0px;top:105.4px;width:6px;height:1.500px;background:#111"></div><div class="a" style="left:50.2px;top:103.2px;width:1.500px;height:6px;background:#111"></div>
<svg style="left:66.5px;top:98.7px" width="15" height="15" viewBox="0 0 15 15"><rect x="0.600" y="0.600" width="13.500" height="13.500" rx="1" fill="#fff" stroke="#8a8a8a" stroke-width="1.200"/><rect x="0" y="0" width="14.700" height="3.600" fill="#3f72b0"/><path d="M3 6.500h2M6.300 6.500h2M9.600 6.500h2M3 9h2M6.300 9h2M9.600 9h2M3 11.500h2M6.300 11.500h2M9.600 11.500h2" stroke="#9db7d9" stroke-width="1.400"/></svg>
<div class="tr" style="left:85.3px;top:99.6px">CobrancaCliente [cobrancaCliente]</div>
<div class="a" style="left:46.0px;top:123.4px;width:10px;height:10px;border:1.200px solid #8ba5c6;background:#fff;border-radius:1px"></div><div class="a" style="left:48.0px;top:127.6px;width:6px;height:1.500px;background:#111"></div><div class="a" style="left:50.2px;top:125.4px;width:1.500px;height:6px;background:#111"></div>
<svg style="left:66.5px;top:120.9px" width="15" height="15" viewBox="0 0 15 15"><rect x="0.600" y="0.600" width="13.500" height="13.500" rx="1" fill="#fff" stroke="#8a8a8a" stroke-width="1.200"/><rect x="0" y="0" width="14.700" height="3.600" fill="#3f72b0"/><path d="M3 6.500h2M6.300 6.500h2M9.600 6.500h2M3 9h2M6.300 9h2M9.600 9h2M3 11.500h2M6.300 11.500h2M9.600 11.500h2" stroke="#9db7d9" stroke-width="1.400"/></svg>
<div class="tr" style="left:85.3px;top:121.8px">ConfiguracoesDoCliente [configuracoesCliente]</div>
<div class="a" style="left:46.0px;top:145.6px;width:10px;height:10px;border:1.200px solid #8ba5c6;background:#fff;border-radius:1px"></div><div class="a" style="left:48.0px;top:149.8px;width:6px;height:1.500px;background:#111"></div><div class="a" style="left:50.2px;top:147.6px;width:1.500px;height:6px;background:#111"></div>
<svg style="left:66.5px;top:143.1px" width="15" height="15" viewBox="0 0 15 15"><rect x="0.600" y="0.600" width="13.500" height="13.500" rx="1" fill="#fff" stroke="#8a8a8a" stroke-width="1.200"/><rect x="0" y="0" width="14.700" height="3.600" fill="#3f72b0"/><path d="M3 6.500h2M6.300 6.500h2M9.600 6.500h2M3 9h2M6.300 9h2M9.600 9h2M3 11.500h2M6.300 11.500h2M9.600 11.500h2" stroke="#9db7d9" stroke-width="1.400"/></svg>
<div class="tr" style="left:85.3px;top:144.0px">CreditoDoCliente [creditoDoCliente]</div>
<div class="a" style="left:46.0px;top:167.8px;width:10px;height:10px;border:1.200px solid #8ba5c6;background:#fff;border-radius:1px"></div><div class="a" style="left:48.0px;top:172.0px;width:6px;height:1.500px;background:#111"></div><div class="a" style="left:50.2px;top:169.8px;width:1.500px;height:6px;background:#111"></div>
<svg style="left:66.5px;top:165.3px" width="15" height="15" viewBox="0 0 15 15"><rect x="0.600" y="0.600" width="13.500" height="13.500" rx="1" fill="#fff" stroke="#8a8a8a" stroke-width="1.200"/><rect x="0" y="0" width="14.700" height="3.600" fill="#3f72b0"/><path d="M3 6.500h2M6.300 6.500h2M9.600 6.500h2M3 9h2M6.300 9h2M9.600 9h2M3 11.500h2M6.300 11.500h2M9.600 11.500h2" stroke="#9db7d9" stroke-width="1.400"/></svg>
<div class="tr" style="left:85.3px;top:166.2px">DadosEntregaPedido</div>
<div class="a" style="left:46.0px;top:190.0px;width:10px;height:10px;border:1.200px solid #8ba5c6;background:#fff;border-radius:1px"></div><div class="a" style="left:48.0px;top:194.2px;width:6px;height:1.500px;background:#111"></div><div class="a" style="left:50.2px;top:192.0px;width:1.500px;height:6px;background:#111"></div>
<svg style="left:66.5px;top:187.5px" width="15" height="15" viewBox="0 0 15 15"><rect x="0.600" y="0.600" width="13.500" height="13.500" rx="1" fill="#fff" stroke="#8a8a8a" stroke-width="1.200"/><rect x="0" y="0" width="14.700" height="3.600" fill="#3f72b0"/><path d="M3 6.500h2M6.300 6.500h2M9.600 6.500h2M3 9h2M6.300 9h2M9.600 9h2M3 11.500h2M6.300 11.500h2M9.600 11.500h2" stroke="#9db7d9" stroke-width="1.400"/></svg>
<div class="tr" style="left:85.3px;top:188.4px">EnderecoComercialDoCliente [enderecoComercialCliente]</div>
<div class="a" style="left:46.0px;top:212.2px;width:10px;height:10px;border:1.200px solid #8ba5c6;background:#fff;border-radius:1px"></div><div class="a" style="left:48.0px;top:216.4px;width:6px;height:1.500px;background:#111"></div><div class="a" style="left:50.2px;top:214.2px;width:1.500px;height:6px;background:#111"></div>
<svg style="left:66.5px;top:209.7px" width="15" height="15" viewBox="0 0 15 15"><rect x="0.600" y="0.600" width="13.500" height="13.500" rx="1" fill="#fff" stroke="#8a8a8a" stroke-width="1.200"/><rect x="0" y="0" width="14.700" height="3.600" fill="#3f72b0"/><path d="M3 6.500h2M6.300 6.500h2M9.600 6.500h2M3 9h2M6.300 9h2M9.600 9h2M3 11.500h2M6.300 11.500h2M9.600 11.500h2" stroke="#9db7d9" stroke-width="1.400"/></svg>
<div class="tr" style="left:85.3px;top:210.6px">EnderecoDoCliente [enderecoDoCliente]</div>
<div class="a" style="left:46.0px;top:234.4px;width:10px;height:10px;border:1.200px solid #8ba5c6;background:#fff;border-radius:1px"></div><div class="a" style="left:48.0px;top:238.6px;width:6px;height:1.500px;background:#111"></div><div class="a" style="left:50.2px;top:236.4px;width:1.500px;height:6px;background:#111"></div>
<svg style="left:66.5px;top:231.9px" width="15" height="15" viewBox="0 0 15 15"><rect x="0.600" y="0.600" width="13.500" height="13.500" rx="1" fill="#fff" stroke="#8a8a8a" stroke-width="1.200"/><rect x="0" y="0" width="14.700" height="3.600" fill="#3f72b0"/><path d="M3 6.500h2M6.300 6.500h2M9.600 6.500h2M3 9h2M6.300 9h2M9.600 9h2M3 11.500h2M6.300 11.500h2M9.600 11.500h2" stroke="#9db7d9" stroke-width="1.400"/></svg>
<div class="tr" style="left:85.3px;top:232.8px">EnderecoEntrega</div>
<div class="a" style="left:46.0px;top:256.6px;width:10px;height:10px;border:1.200px solid #8ba5c6;background:#fff;border-radius:1px"></div><div class="a" style="left:48.0px;top:260.8px;width:6px;height:1.500px;background:#111"></div><div class="a" style="left:50.2px;top:258.6px;width:1.500px;height:6px;background:#111"></div>
<svg style="left:66.5px;top:254.1px" width="15" height="15" viewBox="0 0 15 15"><rect x="0.600" y="0.600" width="13.500" height="13.500" rx="1" fill="#fff" stroke="#8a8a8a" stroke-width="1.200"/><rect x="0" y="0" width="14.700" height="3.600" fill="#3f72b0"/><path d="M3 6.500h2M6.300 6.500h2M9.600 6.500h2M3 9h2M6.300 9h2M9.600 9h2M3 11.500h2M6.300 11.500h2M9.600 11.500h2" stroke="#9db7d9" stroke-width="1.400"/></svg>
<div class="tr" style="left:85.3px;top:255.0px">EnderecoFilial [endrecoFilial]</div>
<div class="a" style="left:46.0px;top:278.8px;width:10px;height:10px;border:1.200px solid #8ba5c6;background:#fff;border-radius:1px"></div><div class="a" style="left:48.0px;top:283.0px;width:6px;height:1.500px;background:#111"></div><div class="a" style="left:50.2px;top:280.8px;width:1.500px;height:6px;background:#111"></div>
<svg style="left:66.5px;top:276.3px" width="15" height="15" viewBox="0 0 15 15"><rect x="0.600" y="0.600" width="13.500" height="13.500" rx="1" fill="#fff" stroke="#8a8a8a" stroke-width="1.200"/><rect x="0" y="0" width="14.700" height="3.600" fill="#3f72b0"/><path d="M3 6.500h2M6.300 6.500h2M9.600 6.500h2M3 9h2M6.300 9h2M9.600 9h2M3 11.500h2M6.300 11.500h2M9.600 11.500h2" stroke="#9db7d9" stroke-width="1.400"/></svg>
<div class="tr" style="left:85.3px;top:277.2px">Filial [filial]</div>
<div class="a" style="left:46.0px;top:301.0px;width:10px;height:10px;border:1.200px solid #8ba5c6;background:#fff;border-radius:1px"></div><div class="a" style="left:48.0px;top:305.2px;width:6px;height:1.500px;background:#111"></div><div class="a" style="left:50.2px;top:303.0px;width:1.500px;height:6px;background:#111"></div>
<svg style="left:66.5px;top:298.5px" width="15" height="15" viewBox="0 0 15 15"><rect x="0.600" y="0.600" width="13.500" height="13.500" rx="1" fill="#fff" stroke="#8a8a8a" stroke-width="1.200"/><rect x="0" y="0" width="14.700" height="3.600" fill="#3f72b0"/><path d="M3 6.500h2M6.300 6.500h2M9.600 6.500h2M3 9h2M6.300 9h2M9.600 9h2M3 11.500h2M6.300 11.500h2M9.600 11.500h2" stroke="#9db7d9" stroke-width="1.400"/></svg>
<div class="tr" style="left:85.3px;top:299.4px">IProdutos [produtos]</div>
<div class="a" style="left:46.0px;top:323.2px;width:10px;height:10px;border:1.200px solid #8ba5c6;background:#fff;border-radius:1px"></div><div class="a" style="left:48.0px;top:327.4px;width:6px;height:1.500px;background:#111"></div><div class="a" style="left:50.2px;top:325.2px;width:1.500px;height:6px;background:#111"></div>
<svg style="left:66.5px;top:320.7px" width="15" height="15" viewBox="0 0 15 15"><rect x="0.600" y="0.600" width="13.500" height="13.500" rx="1" fill="#fff" stroke="#8a8a8a" stroke-width="1.200"/><rect x="0" y="0" width="14.700" height="3.600" fill="#3f72b0"/><path d="M3 6.500h2M6.300 6.500h2M9.600 6.500h2M3 9h2M6.300 9h2M9.600 9h2M3 11.500h2M6.300 11.500h2M9.600 11.500h2" stroke="#9db7d9" stroke-width="1.400"/></svg>
<div class="tr" style="left:85.3px;top:321.6px">PlanoDePagamento [planoPagamento]</div>
<div class="a" style="left:46.0px;top:345.4px;width:10px;height:10px;border:1.200px solid #8ba5c6;background:#fff;border-radius:1px"></div><div class="a" style="left:48.0px;top:349.6px;width:6px;height:1.500px;background:#111"></div><div class="a" style="left:50.2px;top:347.4px;width:1.500px;height:6px;background:#111"></div>
<svg style="left:66.5px;top:342.9px" width="15" height="15" viewBox="0 0 15 15"><rect x="0.600" y="0.600" width="13.500" height="13.500" rx="1" fill="#fff" stroke="#8a8a8a" stroke-width="1.200"/><rect x="0" y="0" width="14.700" height="3.600" fill="#3f72b0"/><path d="M3 6.500h2M6.300 6.500h2M9.600 6.500h2M3 9h2M6.300 9h2M9.600 9h2M3 11.500h2M6.300 11.500h2M9.600 11.500h2" stroke="#9db7d9" stroke-width="1.400"/></svg>
<div class="tr" style="left:85.3px;top:343.8px">PlanoDePagamentoDoCliente [planoDePagamentoDoCliente]</div>
<div class="a" style="left:46.0px;top:367.6px;width:10px;height:10px;border:1.200px solid #8ba5c6;background:#fff;border-radius:1px"></div><div class="a" style="left:48.0px;top:371.8px;width:6px;height:1.500px;background:#111"></div><div class="a" style="left:50.2px;top:369.6px;width:1.500px;height:6px;background:#111"></div>
<svg style="left:66.5px;top:365.1px" width="15" height="15" viewBox="0 0 15 15"><rect x="0.600" y="0.600" width="13.500" height="13.500" rx="1" fill="#fff" stroke="#8a8a8a" stroke-width="1.200"/><rect x="0" y="0" width="14.700" height="3.600" fill="#3f72b0"/><path d="M3 6.500h2M6.300 6.500h2M9.600 6.500h2M3 9h2M6.300 9h2M9.600 9h2M3 11.500h2M6.300 11.500h2M9.600 11.500h2" stroke="#9db7d9" stroke-width="1.400"/></svg>
<div class="tr" style="left:85.3px;top:366.0px">PoliticasComerciais [produtosPoliticasComercias]</div>
<div class="a" style="left:46.0px;top:389.8px;width:10px;height:10px;border:1.200px solid #8ba5c6;background:#fff;border-radius:1px"></div><div class="a" style="left:48.0px;top:394.0px;width:6px;height:1.500px;background:#111"></div><div class="a" style="left:50.2px;top:391.8px;width:1.500px;height:6px;background:#111"></div>
<svg style="left:66.5px;top:387.3px" width="15" height="15" viewBox="0 0 15 15"><rect x="0.600" y="0.600" width="13.500" height="13.500" rx="1" fill="#fff" stroke="#8a8a8a" stroke-width="1.200"/><rect x="0" y="0" width="14.700" height="3.600" fill="#3f72b0"/><path d="M3 6.500h2M6.300 6.500h2M9.600 6.500h2M3 9h2M6.300 9h2M9.600 9h2M3 11.500h2M6.300 11.500h2M9.600 11.500h2" stroke="#9db7d9" stroke-width="1.400"/></svg>
<div class="tr" style="left:85.3px;top:388.2px">Posicao [posicaoDoPedido]</div>
<div class="a" style="left:46.0px;top:412.0px;width:10px;height:10px;border:1.200px solid #8ba5c6;background:#fff;border-radius:1px"></div><div class="a" style="left:48.0px;top:416.2px;width:6px;height:1.500px;background:#111"></div><div class="a" style="left:50.2px;top:414.0px;width:1.500px;height:6px;background:#111"></div>
<svg style="left:66.5px;top:409.5px" width="15" height="15" viewBox="0 0 15 15"><rect x="0.600" y="0.600" width="13.500" height="13.500" rx="1" fill="#fff" stroke="#8a8a8a" stroke-width="1.200"/><rect x="0" y="0" width="14.700" height="3.600" fill="#3f72b0"/><path d="M3 6.500h2M6.300 6.500h2M9.600 6.500h2M3 9h2M6.300 9h2M9.600 9h2M3 11.500h2M6.300 11.500h2M9.600 11.500h2" stroke="#9db7d9" stroke-width="1.400"/></svg>
<div class="tr" style="left:85.3px;top:410.4px">PracaDoCliente [pracaDoCliente]</div>
<div class="a" style="left:46.0px;top:434.2px;width:10px;height:10px;border:1.200px solid #8ba5c6;background:#fff;border-radius:1px"></div><div class="a" style="left:48.0px;top:438.4px;width:6px;height:1.500px;background:#111"></div><div class="a" style="left:50.2px;top:436.2px;width:1.500px;height:6px;background:#111"></div>
<svg style="left:66.5px;top:431.7px" width="15" height="15" viewBox="0 0 15 15"><rect x="0.600" y="0.600" width="13.500" height="13.500" rx="1" fill="#fff" stroke="#8a8a8a" stroke-width="1.200"/><rect x="0" y="0" width="14.700" height="3.600" fill="#3f72b0"/><path d="M3 6.500h2M6.300 6.500h2M9.600 6.500h2M3 9h2M6.300 9h2M9.600 9h2M3 11.500h2M6.300 11.500h2M9.600 11.500h2" stroke="#9db7d9" stroke-width="1.400"/></svg>
<div class="tr" style="left:85.3px;top:432.6px">PracaRegiaoCliente [pracaRegiaoDoCliente]</div>
<div class="a" style="left:46.0px;top:456.4px;width:10px;height:10px;border:1.200px solid #8ba5c6;background:#fff;border-radius:1px"></div><div class="a" style="left:48.0px;top:460.6px;width:6px;height:1.500px;background:#111"></div><div class="a" style="left:50.2px;top:458.4px;width:1.500px;height:6px;background:#111"></div>
<svg style="left:66.5px;top:453.9px" width="15" height="15" viewBox="0 0 15 15"><rect x="0.600" y="0.600" width="13.500" height="13.500" rx="1" fill="#fff" stroke="#8a8a8a" stroke-width="1.200"/><rect x="0" y="0" width="14.700" height="3.600" fill="#3f72b0"/><path d="M3 6.500h2M6.300 6.500h2M9.600 6.500h2M3 9h2M6.300 9h2M9.600 9h2M3 11.500h2M6.300 11.500h2M9.600 11.500h2" stroke="#9db7d9" stroke-width="1.400"/></svg>
<div class="tr" style="left:85.3px;top:454.8px">PrazosDoPlanoDePagamento [prazosDoPlanoDePagamento]</div>
<div class="a" style="left:46.0px;top:478.6px;width:10px;height:10px;border:1.200px solid #8ba5c6;background:#fff;border-radius:1px"></div><div class="a" style="left:48.0px;top:482.8px;width:6px;height:1.500px;background:#111"></div><div class="a" style="left:50.2px;top:480.6px;width:1.500px;height:6px;background:#111"></div>
<svg style="left:66.5px;top:476.1px" width="15" height="15" viewBox="0 0 15 15"><rect x="0.600" y="0.600" width="13.500" height="13.500" rx="1" fill="#fff" stroke="#8a8a8a" stroke-width="1.200"/><rect x="0" y="0" width="14.700" height="3.600" fill="#3f72b0"/><path d="M3 6.500h2M6.300 6.500h2M9.600 6.500h2M3 9h2M6.300 9h2M9.600 9h2M3 11.500h2M6.300 11.500h2M9.600 11.500h2" stroke="#9db7d9" stroke-width="1.400"/></svg>
<div class="tr" style="left:85.3px;top:477.0px">ProdutoBase [listProdutoBase]</div>
<div class="a" style="left:46.0px;top:500.8px;width:10px;height:10px;border:1.200px solid #8ba5c6;background:#fff;border-radius:1px"></div><div class="a" style="left:48.0px;top:505.0px;width:6px;height:1.500px;background:#111"></div><div class="a" style="left:50.2px;top:502.8px;width:1.500px;height:6px;background:#111"></div>
<svg style="left:66.5px;top:498.3px" width="15" height="15" viewBox="0 0 15 15"><rect x="0.600" y="0.600" width="13.500" height="13.500" rx="1" fill="#fff" stroke="#8a8a8a" stroke-width="1.200"/><rect x="0" y="0" width="14.700" height="3.600" fill="#3f72b0"/><path d="M3 6.500h2M6.300 6.500h2M9.600 6.500h2M3 9h2M6.300 9h2M9.600 9h2M3 11.500h2M6.300 11.500h2M9.600 11.500h2" stroke="#9db7d9" stroke-width="1.400"/></svg>
<div class="tr" style="left:85.3px;top:499.2px">Produtos</div>
<div class="a" style="left:46.0px;top:523.0px;width:10px;height:10px;border:1.200px solid #8ba5c6;background:#fff;border-radius:1px"></div><div class="a" style="left:48.0px;top:527.2px;width:6px;height:1.500px;background:#111"></div><div class="a" style="left:50.2px;top:525.0px;width:1.500px;height:6px;background:#111"></div>
<svg style="left:66.5px;top:520.5px" width="15" height="15" viewBox="0 0 15 15"><rect x="0.600" y="0.600" width="13.500" height="13.500" rx="1" fill="#fff" stroke="#8a8a8a" stroke-width="1.200"/><rect x="0" y="0" width="14.700" height="3.600" fill="#3f72b0"/><path d="M3 6.500h2M6.300 6.500h2M9.600 6.500h2M3 9h2M6.300 9h2M9.600 9h2M3 11.500h2M6.300 11.500h2M9.600 11.500h2" stroke="#9db7d9" stroke-width="1.400"/></svg>
<div class="tr" style="left:85.3px;top:521.4px">Produtos_Categoria</div>
<div class="a" style="left:46.0px;top:545.2px;width:10px;height:10px;border:1.200px solid #8ba5c6;background:#fff;border-radius:1px"></div><div class="a" style="left:48.0px;top:549.4px;width:6px;height:1.500px;background:#111"></div><div class="a" style="left:50.2px;top:547.2px;width:1.500px;height:6px;background:#111"></div>
<svg style="left:66.5px;top:542.7px" width="15" height="15" viewBox="0 0 15 15"><rect x="0.600" y="0.600" width="13.500" height="13.500" rx="1" fill="#fff" stroke="#8a8a8a" stroke-width="1.200"/><rect x="0" y="0" width="14.700" height="3.600" fill="#3f72b0"/><path d="M3 6.500h2M6.300 6.500h2M9.600 6.500h2M3 9h2M6.300 9h2M9.600 9h2M3 11.500h2M6.300 11.500h2M9.600 11.500h2" stroke="#9db7d9" stroke-width="1.400"/></svg>
<div class="tr" style="left:85.3px;top:543.6px">Produtos_DadosAdicionais</div>
<div class="a" style="left:46.0px;top:567.4px;width:10px;height:10px;border:1.200px solid #8ba5c6;background:#fff;border-radius:1px"></div><div class="a" style="left:48.0px;top:571.6px;width:6px;height:1.500px;background:#111"></div><div class="a" style="left:50.2px;top:569.4px;width:1.500px;height:6px;background:#111"></div>
<svg style="left:66.5px;top:564.9px" width="15" height="15" viewBox="0 0 15 15"><rect x="0.600" y="0.600" width="13.500" height="13.500" rx="1" fill="#fff" stroke="#8a8a8a" stroke-width="1.200"/><rect x="0" y="0" width="14.700" height="3.600" fill="#3f72b0"/><path d="M3 6.500h2M6.300 6.500h2M9.600 6.500h2M3 9h2M6.300 9h2M9.600 9h2M3 11.500h2M6.300 11.500h2M9.600 11.500h2" stroke="#9db7d9" stroke-width="1.400"/></svg>
<div class="tr" style="left:85.3px;top:565.8px">Produtos_Departamento</div>
</div>
<div class="a" style="left:440px;top:191px;width:18px;height:581px;background:#fbfbfb"></div>
<svg style="left:441px;top:202px" width="14" height="8" viewBox="0 0 14 8"><path d="M0 8l7-8 7 8z" fill="#8c8c8c"/></svg>
<div class="a" style="left:443px;top:220px;width:11px;height:206px;border-radius:5.500px;background:#8c8c8c"></div>
<svg style="left:441px;top:752px" width="14" height="8" viewBox="0 0 14 8"><path d="M0 0l7 8 7-8z" fill="#8c8c8c"/></svg>
<svg style="left:52px;top:774px" width="8" height="13" viewBox="0 0 8 13"><path d="M8 0L0 6.500 8 13z" fill="#8c8c8c"/></svg>
<div class="a" style="left:71px;top:775.700px;width:286px;height:10.600px;border-radius:5.300px;background:#8c8c8c"></div>
<svg style="left:420px;top:774px" width="8" height="13" viewBox="0 0 8 13"><path d="M0 0l8 6.500L0 13z" fill="#8c8c8c"/></svg>
<div class="a" style="left:42px;top:786px;width:416px;height:1px;background:#c8c8c8"></div>
<div class="rb" style="left:56px;top:795px;font-size:13.450px">Propriedades</div>
<div class="a" style="left:153px;top:787px;width:1px;height:33px;background:#c8c8c8"></div>
<div class="a" style="left:237px;top:787px;width:1px;height:33px;background:#c8c8c8"></div>
<div class="a" style="left:153px;top:819px;width:85px;height:2px;background:#0b6333"></div>
<div class="rb" style="left:165.500px;top:795px;font-size:13.450px;color:#6a9c82">Dicionário</div>
<div class="rb" style="left:254px;top:795px;font-size:13.450px">Árvore de relatório</div>
<!-- s_design -->
<div class="a" style="left:460px;top:152px;width:1083px;height:1px;background:#c8c8c8"></div>
<div class="a" style="left:476px;top:118px;width:86px;height:34px;background:#fff;border:1px solid #c8c8c8;border-top:2px solid #0b6333;border-bottom:none"></div>
<div class="rb" style="left:499.500px;top:127.500px;color:#6a9c82">Page1</div>
<svg style="left:577px;top:125px" width="14" height="14" viewBox="0 0 14 14"><path d="M7 0v14M0 7h14" stroke="#333" stroke-width="1.800"/></svg>
<div class="a" style="left:460px;top:153px;width:1083px;height:671px;background:#f0f0f0"></div>
<div class="a" style="left:460px;top:153px;width:1064px;height:651.7px;overflow:hidden">
<div class="a" style="left:-460px;top:-153px;width:1569px;height:900px">
<div class="a" style="left:476px;top:169.500px;width:1100px;height:700px;background:#fff;border:1px solid #c4c4c4"></div>
<div class="a" style="left:534px;top:215px;width:2px;height:600px;background:#b9b9b9"></div>
<div class="a" style="left:534px;top:215px;width:1000px;height:18.5px;background:#d9d9d9"></div>
<div class="a" style="left:535px;top:233.500px;width:1000px;height:168px;background:#f7f7f7"></div>
<div class="a" style="left:570.300px;top:250.600px;width:124.300px;height:115.500px;background:#d5e2d7"></div>
<div class="a" style="left:534px;top:418.2px;width:1000px;height:18.2px;background:#7aa7d6"></div>
<div class="a" style="left:534.400px;top:499px;width:1000px;height:8.500px;background:#e4ecf8"></div>
<div class="a" style="left:534px;top:524px;width:1000px;height:17.5px;background:#bccee8"></div>
<div class="a" style="left:534px;top:578.4px;width:1000px;height:15.2px;background:#7aa7d6"></div>
<div class="a" style="left:534px;top:702.5px;width:1000px;height:18.3px;background:#7aa7d6"></div>
<svg style="left:0;top:0" width="1569" height="859" viewBox="0 0 1569 859"><path d="M543.5 215V808M552.5 215V808M561.5 215V808M570.5 215V808M579.5 215V808M588.5 215V808M597.5 215V808M605.5 215V808M614.5 215V808M623.5 215V808M632.5 215V808M641.5 215V808M650.5 215V808M659.5 215V808M667.5 215V808M676.5 215V808M685.5 215V808M694.5 215V808M703.5 215V808M712.5 215V808M721.5 215V808M729.5 215V808M738.5 215V808M747.5 215V808M756.5 215V808M765.5 215V808M774.5 215V808M783.5 215V808M791.5 215V808M800.5 215V808M809.5 215V808M818.5 215V808M827.5 215V808M836.5 215V808M844.5 215V808M853.5 215V808M862.5 215V808M871.5 215V808M880.5 215V808M889.5 215V808M898.5 215V808M906.5 215V808M915.5 215V808M924.5 215V808M933.5 215V808M942.5 215V808M951.5 215V808M960.5 215V808M968.5 215V808M977.5 215V808M986.5 215V808M995.5 215V808M1004.5 215V808M1013.5 215V808M1022.5 215V808M1030.5 215V808M1039.5 215V808M1048.5 215V808M1057.5 215V808M1066.5 215V808M1075.5 215V808M1084.5 215V808M1092.5 215V808M1101.5 215V808M1110.5 215V808M1119.5 215V808M1128.5 215V808M1137.5 215V808M1145.5 215V808M1154.5 215V808M1163.5 215V808M1172.5 215V808M1181.5 215V808M1190.5 215V808M1199.5 215V808M1207.5 215V808M1216.5 215V808M1225.5 215V808M1234.5 215V808M1243.5 215V808M1252.5 215V808M1261.5 215V808M1269.5 215V808M1278.5 215V808M1287.5 215V808M1296.5 215V808M1305.5 215V808M1314.5 215V808M1323.5 215V808M1331.5 215V808M1340.5 215V808M1349.5 215V808M1358.5 215V808M1367.5 215V808M1376.5 215V808M1385.5 215V808M1393.5 215V808M1402.5 215V808M1411.5 215V808M1420.5 215V808M1429.5 215V808M1438.5 215V808M1446.5 215V808M1455.5 215V808M1464.5 215V808M1473.5 215V808M1482.5 215V808M1491.5 215V808M1500.5 215V808M1508.5 215V808M1517.5 215V808" fill="none" stroke="rgba(0,0,0,.135)" stroke-width="1" stroke-dasharray="1 1"/><path d="M535 242.5H1526M535 251.5H1526M535 260.5H1526M535 269.5H1526M535 277.5H1526M535 286.5H1526M535 295.5H1526M535 304.5H1526M535 313.5H1526M535 322.5H1526M535 330.5H1526M535 339.5H1526M535 348.5H1526M535 357.5H1526M535 366.5H1526M535 375.5H1526M535 384.5H1526M535 392.5H1526M535 401.5H1526M535 410.5H1526M535 419.5H1526M535 428.5H1526M535 437.5H1526M535 446.5H1526M535 454.5H1526M535 463.5H1526M535 472.5H1526M535 481.5H1526M535 490.5H1526M535 499.5H1526M535 508.5H1526M535 516.5H1526M535 525.5H1526M535 534.5H1526M535 543.5H1526M535 552.5H1526M535 561.5H1526M535 570.5H1526M535 578.5H1526M535 587.5H1526M535 596.5H1526M535 605.5H1526M535 614.5H1526M535 623.5H1526M535 631.5H1526M535 640.5H1526M535 649.5H1526M535 658.5H1526M535 667.5H1526M535 676.5H1526M535 685.5H1526M535 693.5H1526M535 702.5H1526M535 711.5H1526M535 720.5H1526M535 729.5H1526M535 738.5H1526M535 747.5H1526M535 755.5H1526M535 764.5H1526M535 773.5H1526M535 782.5H1526M535 791.5H1526M535 800.5H1526" fill="none" stroke="rgba(0,0,0,.135)" stroke-width="1" stroke-dasharray="1 1"/></svg>
<div class="bh" style="top:215px;height:18.5px;font-size:13.33px">PageHeaderBand1</div>
<div class="bh" style="top:418.2px;height:18.2px;">DataBand1; Fonte de dados: Cliente</div>
<div class="bh" style="top:524px;height:17.5px;padding-top:1.800px">HeaderBand2</div>
<div class="bh" style="top:578.4px;height:15.2px;line-height:18px;padding-top:1.200px">DataBand2; Fonte de dados: Produtos_EmbalagemSelecionada</div>
<div class="bh" style="top:702.5px;height:18.3px;">DataBand3; Fonte de dados: Não Nomeado</div>
<div class="a" style="left:567.3px;top:247.6px;width:6px;height:6px;background:#6a6a6a"></div><div class="a" style="left:567.3px;top:305.3px;width:6px;height:6px;background:#6a6a6a"></div><div class="a" style="left:567.3px;top:363.1px;width:6px;height:6px;background:#6a6a6a"></div><div class="a" style="left:629.4px;top:247.6px;width:6px;height:6px;background:#6a6a6a"></div><div class="a" style="left:629.4px;top:363.1px;width:6px;height:6px;background:#6a6a6a"></div><div class="a" style="left:691.6px;top:247.6px;width:6px;height:6px;background:#6a6a6a"></div><div class="a" style="left:691.6px;top:305.3px;width:6px;height:6px;background:#6a6a6a"></div><div class="a" style="left:691.6px;top:363.1px;width:6px;height:6px;background:#6a6a6a"></div>
<div class="rt" style="font-size:12px;line-height:12px;color:#111;font-weight:bold;left:728.0px;top:257.4px;">COD. {filial.codigo} - {filial.nome}</div>
<div class="rt" style="font-size:12px;line-height:12px;color:#111;left:728.0px;top:275.1px;">CNPJ: {filial.cgc}</div>
<div class="rt" style="font-size:12px;line-height:12px;color:#111;left:728.0px;top:297.1px;">END: {endrecoFilial.logradouro}</div>
<div class="rt" style="font-size:12px;line-height:12px;color:#111;left:728.0px;top:314.8px;">BAIRRO: {endrecoFilial.bairro}</div>
<div class="rt" style="font-size:12px;line-height:12px;color:#111;left:728.0px;top:331.8px;">CIDADE/UF: {endrecoFilial.cidade}</div>
<div class="rt" style="font-size:12px;line-height:12px;color:#111;left:728.0px;top:349.9px;">CEP: {endrecoFilial.cep}</div>
<div class="rt" style="font-size:12px;line-height:12px;color:#111;font-weight:bold;left:728.0px;top:368.1px;">FONE: {filial.telefone}</div>
<div class="rt" style="font-size:12px;line-height:12px;color:#111;font-weight:bold;left:1061.4px;top:348.6px;">Representante:</div>
<div class="rt" style="font-size:12px;line-height:12px;color:#111;left:1061.4px;top:367.4px;">COD. {representante.codigo} - {representante.nome}</div>
<div class="rt" style="font-size:12px;line-height:12px;color:#111;left:1509.3px;top:363.1px;">edido</div>
<div class="a" style="left:534px;top:436.500px;width:1000px;height:62.500px;background:#dedede;border:1.700px solid #484848;border-right:none"></div>
<div class="a" style="left:539.1px;top:445.4px;width:337.3px;height:13.1px;background:#e9e9e9"></div>
<div class="rt" style="font-size:12px;line-height:12px;color:#111;left:542.6px;top:446.9px;">CLIENTE: {cliente.codigo}-{cliente.nome}</div>
<div class="a" style="left:539.1px;top:462.6px;width:337.3px;height:13.1px;background:#e9e9e9"></div>
<div class="rt" style="font-size:12px;line-height:12px;color:#111;left:542.6px;top:464.1px;">END. COM: {enderecoComercialCliente.logradouro}</div>
<div class="a" style="left:955.5px;top:446px;width:240.4px;height:13.1px;background:#e9e9e9"></div>
<div class="rt" style="font-size:12px;line-height:12px;color:#111;left:958.5px;top:447.4px;">CPF/CNPJ: {cliente.cnpj}</div>
<div class="a" style="left:955.5px;top:463.5px;width:240.4px;height:12.7px;background:#e9e9e9"></div>
<div class="rt" style="font-size:12px;line-height:12px;color:#111;left:958.5px;top:464.3px;">BAIRRO: {enderecoComercialCliente.bairro}</div>
<div class="a" style="left:955.5px;top:481.6px;width:115.2px;height:12.7px;background:#e9e9e9"></div>
<div class="rt" style="font-size:12px;line-height:12px;color:#111;left:958.5px;width:111.0px;overflow:hidden;top:481.9px;">DATA DE ENTREGA:</div>
<div class="a" style="left:1074.4px;top:481.6px;width:169.3px;height:12.7px;background:#e9e9e9"></div>
<div class="rt" style="font-size:12px;line-height:12px;color:#111;left:1078.0px;width:165.5px;overflow:hidden;top:481.9px;">{DadosEntregaPedido.dataEntrega}</div>
<div class="a" style="left:1252.8px;top:446px;width:238.7px;height:13.1px;background:#e9e9e9"></div>
<div class="rt" style="font-size:12px;line-height:12px;color:#111;left:1256.0px;top:447.4px;">CIDADE: {enderecoComercialCliente.cidade}</div>
<div class="a" style="left:1252.8px;top:463.5px;width:186.1px;height:12.7px;background:#e9e9e9"></div>
<div class="rt" style="font-size:12px;line-height:12px;color:#111;left:1256.0px;top:464.3px;">UF: {enderecoDoCliente.uf}</div>
<div class="a" style="left:1252.8px;top:481.6px;width:447.2px;height:12.7px;background:#e9e9e9"></div>
<div class="rt" style="font-size:12px;line-height:12px;color:#111;left:1256.0px;top:481.9px;">ID PEDIDO: {DadosEntregaPedido.idPedido}</div>
<div class="t" style="left:537.500px;top:440.500px;font-size:19.600px;color:rgba(100,100,100,.46)">Panel1</div>
<svg style="left:0;top:0" width="1569" height="859"><path d="M536 507.400H1530" stroke="#7aa7d6" stroke-width="1.500" stroke-dasharray="2.800 1.700"/></svg>
<div class="a" style="left:536px;top:541.500px;width:1000px;height:19.500px;background:#fff"></div>
<div class="rt" style="font-size:8.9px;line-height:8.9px;color:#111;font-weight:bold;left:534.4px;width:62.6px;text-align:center;top:546.7px;">ITEM</div>
<div class="rt" style="font-size:8.9px;line-height:8.9px;color:#111;font-weight:bold;left:597px;width:61.9px;text-align:center;top:546.7px;">FOTO</div>
<div class="rt" style="font-size:8.9px;line-height:8.9px;color:#111;font-weight:bold;left:658.9px;width:44.4px;text-align:center;top:546.7px;">COD.</div>
<div class="rt" style="font-size:8.9px;line-height:8.9px;color:#111;font-weight:bold;left:703.3px;width:123.9px;text-align:center;top:546.7px;">DESCRICAO</div>
<div class="rt" style="font-size:8.9px;line-height:8.9px;color:#111;font-weight:bold;left:827.2px;width:44.0px;text-align:center;top:546.7px;">EMB.</div>
<div class="rt" style="font-size:8.9px;line-height:8.9px;color:#111;font-weight:bold;left:871.2px;width:67.1px;text-align:center;top:546.7px;">COD. FAB.</div>
<div class="rt" style="font-size:8.9px;line-height:8.9px;color:#111;font-weight:bold;left:938.3px;width:76.2px;text-align:center;top:546.7px;">COD. MARCA</div>
<div class="rt" style="font-size:8.9px;line-height:8.9px;color:#111;font-weight:bold;left:1014.5px;width:78.5px;text-align:center;top:546.7px;">MARCA</div>
<div class="rt" style="font-size:8.9px;line-height:8.9px;color:#111;font-weight:bold;left:1314.6px;width:43.0px;text-align:center;top:546.7px;">UN</div>
<div class="rt" style="font-size:8.9px;line-height:8.9px;color:#111;font-weight:bold;left:1357.6px;width:27.0px;text-align:center;top:546.7px;">QTDE</div>
<div class="rt" style="font-size:8.9px;line-height:8.9px;color:#111;font-weight:bold;left:1384.6px;width:71.1px;text-align:center;top:546.7px;">VLR. DESC.</div>
<div class="rt" style="font-size:8.9px;line-height:8.9px;color:#111;font-weight:bold;left:1455.7px;width:53.0px;text-align:center;top:546.7px;">% DESC.</div>
<div class="rt" style="font-size:8.9px;line-height:8.9px;color:#111;font-weight:bold;left:1517.8px;top:546.7px;">VLR. UNIT.</div>
<div class="rt" style="font-size:12px;line-height:12px;color:#111;left:1097.2px;width:84.0px;overflow:hidden;top:543.9px;">{Produtos_Categoria.codigo}</div>
<div class="rt" style="font-size:12px;line-height:12px;color:#111;left:1186.0px;width:128.0px;overflow:hidden;top:543.9px;">{Produtos_Categoria.nome}</div>
<div class="a" style="left:536px;top:593.500px;width:1000px;height:29.300px;background:#f3f3f3"></div>
<div class="a" style="left:538.200px;top:622.800px;width:1000px;height:59px;background:#f2f2f2"></div>
<div class="a" style="left:533px;top:622.800px;width:5.500px;height:61.500px;background:#fff"></div>
<div class="a" style="left:536px;top:681.800px;width:1000px;height:4px;background:#fff"></div>
<div class="a" style="left:534.4px;top:593.5px;width:62.9px;height:29.3px;background:#f8f8f8"></div>
<div class="rt" style="left:534.4px;width:62.9px;top:605px;font-size:8.950px;line-height:10px;text-align:center">{Line}</div>
<div class="a" style="left:605.500px;top:593.5px;width:44.500px;height:29.3px;background:#d3dfd4;overflow:hidden"><div class="t" style="left:2.500px;top:4.500px;font-size:14px;color:#222">URL da</div></div>
<div class="a" style="left:657.7px;top:593.5px;width:45.9px;height:29.3px;background:#f8f8f8"></div>
<div class="a" style="left:655.2px;width:47.2px;top:603px;height:13px;overflow:hidden"><div class="rt" style="left:-72.98px;top:1.500px;font-size:8.950px;line-height:10px">{Produtos_EmbalagemSelecionada.codigo}</div></div>
<div class="a" style="left:703.6px;top:593.5px;width:124.0px;height:29.3px;background:#f8f8f8"></div>
<div class="rt" style="left:703.6px;width:124.0px;top:599.500px;font-size:8.950px;line-height:9.800px;text-align:center">{Produtos_EmbalagemSelecio
nada.Produtos.descricao}</div>
<div class="a" style="left:827.6px;top:593.5px;width:43.6px;height:29.3px;background:#f8f8f8"></div>
<div class="a" style="left:825.1px;width:44.9px;top:603px;height:13px;overflow:hidden"><div class="rt" style="left:-62.94px;top:1.500px;font-size:8.950px;line-height:10px">{Produtos_EmbalagemSelecionada.embalagem}</div></div>
<div class="a" style="left:871.2px;top:593.5px;width:70.6px;height:29.3px;background:#f8f8f8"></div>
<div class="a" style="left:868.7px;width:71.9px;top:603px;height:13px;overflow:hidden"><div class="rt" style="left:-71.08px;top:1.500px;font-size:8.950px;line-height:10px">{Produtos_EmbalagemSelecionada.Produtos.codigoFabrica}</div></div>
<div class="a" style="left:941.8px;top:593.5px;width:75.7px;height:29.3px;background:#f8f8f8"></div>
<div class="a" style="left:939.3px;width:77.0px;top:603px;height:13px;overflow:hidden"><div class="rt" style="left:-70.14px;top:1.500px;font-size:8.950px;line-height:10px">{Produtos_EmbalagemSelecionada.Produtos.codigoMarca}</div></div>
<div class="a" style="left:1017.5px;top:593.5px;width:76.8px;height:29.3px;background:#f8f8f8"></div>
<div class="a" style="left:1015.0px;width:78.1px;top:603px;height:13px;overflow:hidden"><div class="rt" style="left:-64.94px;top:1.500px;font-size:8.950px;line-height:10px">{Produtos_EmbalagemSelecionada.DadosAdicionais.marca}</div></div>
<div class="a" style="left:1094.3px;top:593.5px;width:86.7px;height:29.3px;background:#f8f8f8"></div>
<div class="a" style="left:1091.8px;width:88.0px;top:603px;height:13px;overflow:hidden"><div class="rt" style="left:-56.92px;top:1.500px;font-size:8.950px;line-height:10px">{Produtos_EmbalagemSelecionada.Fornecedor.codigo}</div></div>
<div class="a" style="left:1181px;top:593.5px;width:133.6px;height:29.3px;background:#f8f8f8"></div>
<div class="rt" style="left:1181px;width:133.6px;top:599.500px;font-size:8.950px;line-height:9.800px;text-align:center">{Produtos_EmbalagemSeleciona
da.Fornecedor.nome}</div>
<div class="a" style="left:1314.6px;top:593.5px;width:43.0px;height:29.3px;background:#f8f8f8"></div>
<div class="a" style="left:1312.1px;width:44.3px;top:603px;height:13px;overflow:hidden"><div class="rt" style="left:-56.89px;top:1.500px;font-size:8.950px;line-height:10px">{Produtos_EmbalagemSelecionada.unidade}</div></div>
<div class="a" style="left:1357.6px;top:593.5px;width:27.0px;height:29.3px;background:#f8f8f8"></div>
<div class="a" style="left:1357.6px;width:25.8px;top:603px;height:13px;overflow:hidden"><div class="rt" style="left:-89.57px;top:1.500px;font-size:8.950px;line-height:10px">{Produtos_EmbalagemSelecionada.qtde}</div></div>
<div class="a" style="left:1384.6px;top:593.5px;width:71.1px;height:29.3px;background:#f8f8f8"></div>
<div class="a" style="left:1384.6px;width:69.9px;top:603px;height:13px;overflow:hidden"><div class="rt" style="left:-141.83px;top:1.500px;font-size:8.950px;line-height:10px">{Produtos_EmbalagemSelecionada.qtde*Produtos_EmbalagemSelecionada.valorDesc}</div></div>
<div class="a" style="left:1455.7px;top:593.5px;width:53.0px;height:29.3px;background:#f8f8f8"></div>
<div class="a" style="left:1453.2px;width:54.3px;top:603px;height:13px;overflow:hidden"><div class="rt" style="left:-103.85px;top:1.500px;font-size:8.950px;line-height:10px">{Produtos_EmbalagemSelecionada.Produtos.percDesc}</div></div>
<div class="a" style="left:1508.7px;top:593.5px;width:71.3px;height:29.3px;background:#f8f8f8"></div>
<div class="a" style="left:1508.7px;width:70.1px;top:603px;height:13px;overflow:hidden"><div class="rt" style="left:-67.04px;top:1.500px;font-size:8.950px;line-height:10px">{Produtos_EmbalagemSelecionada.valor}</div></div>
<div class="a" style="left:534.300px;top:737.800px;width:1000px;height:100px;background:#dedede;border:1.500px solid #2a2a2a;border-right:none"></div>
<div class="a" style="left:543px;top:745.600px;width:550.500px;height:70px;background:#e7e7e7"></div>
<div class="a" style="left:1349.500px;top:755px;width:300px;height:70px;background:#e5e5e5"></div>
<div class="t" style="left:537.300px;top:739.800px;font-size:19.700px;color:rgba(100,100,100,.46)">Panel2</div>
<div class="rt" style="font-size:12px;line-height:12px;color:#111;font-weight:bold;left:547.2px;top:746.8px;">FORM. PAGTO:</div>
<div class="rt" style="font-size:12px;line-height:12px;color:#111;left:742.6px;top:746.8px;">{cobranca.codigo} - {cobranca.descricao}</div>
<div class="rt" style="font-size:12px;line-height:12px;color:#111;font-weight:bold;left:547.2px;top:764.8px;">COND. PAGTO:</div>
<div class="rt" style="font-size:12px;line-height:12px;color:#111;left:742.6px;top:764.8px;">{planoPagamento.codigo} - {planoPagamento.descricao}</div>
<div class="rt" style="font-size:12px;line-height:12px;color:#111;font-weight:bold;left:547.2px;top:782.5px;">FRETE:</div>
<div class="rt" style="font-size:12px;line-height:12px;color:#111;left:742.6px;top:782.5px;">{filial.tipoFreteAuto}</div>
<div class="rt" style="font-size:12px;line-height:12px;color:#111;font-weight:bold;left:547.2px;top:800.1px;">TRANSPORTADORA:</div>
<div class="rt" style="font-size:12px;line-height:12px;color:#111;left:742.6px;top:800.1px;">{transportadoraDoRepresentante.nome}</div>
<div class="rt" style="font-size:12px;line-height:12px;color:#111;left:1353.0px;top:755.9px;">VALOR TOTAL IPI:</div>
<div class="rt" style="font-size:12px;line-height:12px;color:#111;left:1353.0px;top:773.8px;">VALOR TOTAL ST:</div>
<div class="rt" style="font-size:12px;line-height:12px;color:#111;left:1353.0px;top:791.7px;">TOTAL PRODUTOS:</div>
<svg style="left:0;top:0" width="1569" height="859" viewBox="0 0 1569 859"><path d="M725 259.2V254.2H730M1207 254.2H1212V259.2M725 267.4V272.4H730M1207 272.4H1212V267.4M924 268.6H929V273.6M725 290.5V295.5H730M924 295.5H929V290.5M725 300.5V295.5H730M924 295.5H929V300.5M725 307.8V312.8H730M924 312.8H929V307.8M725 317.8V312.8H730M924 312.8H929V317.8M725 324.5V329.5H730M924 329.5H929V324.5M725 334.5V329.5H730M924 329.5H929V334.5M725 342.9V347.9H730M924 347.9H929V342.9M725 352.9V347.9H730M924 347.9H929V352.9M725 361V366H730M924 366H929V361M725 371V366H730M898 366H903V371M725 378.8V383.8H730M898 383.8H903V378.8M1058.4 353.3V348.3H1063.4M1141.2 348.3H1146.2V353.3M1058.4 360.7V365.7H1063.4M1141.2 365.7H1146.2V360.7M1058.4 370.7V365.7H1063.4M1327.6 365.7H1332.6V370.7M1058.4 379.2V384.2H1063.4M1327.6 384.2H1332.6V379.2M1508.5 362.4V357.4H1513.5M1695 357.4H1700V362.4M1508.5 379V384H1513.5M1695 384H1700V379M539.1 450.4V445.4H544.1M871.4 445.4H876.4V450.4M539.1 453.5V458.5H544.1M871.4 458.5H876.4V453.5M539.1 467.6V462.6H544.1M871.4 462.6H876.4V467.6M539.1 470.7V475.7H544.1M871.4 475.7H876.4V470.7M955.5 451V446H960.5M1190.9 446H1195.9V451M955.5 454.1V459.1H960.5M1190.9 459.1H1195.9V454.1M955.5 468.5V463.5H960.5M1190.9 463.5H1195.9V468.5M955.5 471.2V476.2H960.5M1190.9 476.2H1195.9V471.2M955.5 486.6V481.6H960.5M1065.7 481.6H1070.7V486.6M955.5 489.3V494.3H960.5M1065.7 494.3H1070.7V489.3M1074.4 486.6V481.6H1079.4M1238.7 481.6H1243.7V486.6M1074.4 489.3V494.3H1079.4M1238.7 494.3H1243.7V489.3M1252.8 451V446H1257.8M1486.5 446H1491.5V451M1252.8 454.1V459.1H1257.8M1486.5 459.1H1491.5V454.1M1252.8 468.5V463.5H1257.8M1433.9 463.5H1438.9V468.5M1252.8 471.2V476.2H1257.8M1433.9 476.2H1438.9V471.2M1252.8 486.6V481.6H1257.8M1695 481.6H1700V486.6M1252.8 489.3V494.3H1257.8M1695 494.3H1700V489.3M534.4 545.5V541.5H538.4M593 541.5H597V545.5M534.4 556.7V560.7H538.4M593 560.7H597V556.7M597 545.5V541.5H601M654.9 541.5H658.9V545.5M597 556.7V560.7H601M654.9 560.7H658.9V556.7M658.9 545.5V541.5H662.9M699.3 541.5H703.3V545.5M658.9 556.7V560.7H662.9M699.3 560.7H703.3V556.7M703.3 545.5V541.5H707.3M823.2 541.5H827.2V545.5M703.3 556.7V560.7H707.3M823.2 560.7H827.2V556.7M827.2 545.5V541.5H831.2M867.2 541.5H871.2V545.5M827.2 556.7V560.7H831.2M867.2 560.7H871.2V556.7M871.2 545.5V541.5H875.2M934.3 541.5H938.3V545.5M871.2 556.7V560.7H875.2M934.3 560.7H938.3V556.7M938.3 545.5V541.5H942.3M1010.5 541.5H1014.5V545.5M938.3 556.7V560.7H942.3M1010.5 560.7H1014.5V556.7M1014.5 545.5V541.5H1018.5M1089 541.5H1093V545.5M1014.5 556.7V560.7H1018.5M1089 560.7H1093V556.7M1314.6 545.5V541.5H1318.6M1353.6 541.5H1357.6V545.5M1314.6 556.7V560.7H1318.6M1353.6 560.7H1357.6V556.7M1357.6 545.5V541.5H1361.6M1380.6 541.5H1384.6V545.5M1357.6 556.7V560.7H1361.6M1380.6 560.7H1384.6V556.7M1384.6 545.5V541.5H1388.6M1451.7 541.5H1455.7V545.5M1384.6 556.7V560.7H1388.6M1451.7 560.7H1455.7V556.7M1455.7 545.5V541.5H1459.7M1504.7 541.5H1508.7V545.5M1455.7 556.7V560.7H1459.7M1504.7 560.7H1508.7V556.7M1508.7 545.5V541.5H1512.7M1576 541.5H1580V545.5M1508.7 556.7V560.7H1512.7M1576 560.7H1580V556.7M1093 546.5V541.5H1098M1176.8 541.5H1181.8V546.5M1093 564.3V569.3H1098M1176.8 569.3H1181.8V564.3M1181.8 546.5V541.5H1186.8M1309.6 541.5H1314.6V546.5M1181.8 564.3V569.3H1186.8M1309.6 569.3H1314.6V564.3M534.4 597.5V593.5H538.4M593.3 593.5H597.3V597.5M534.4 618.8V622.8H538.4M593.3 622.8H597.3V618.8M605.5 598.5V593.5H610.5M645 593.5H650V598.5M605.5 617.8V622.8H610.5M645 622.8H650V617.8M657.7 597.5V593.5H661.7M699.6 593.5H703.6V597.5M657.7 618.8V622.8H661.7M699.6 622.8H703.6V618.8M703.6 597.5V593.5H707.6M823.6 593.5H827.6V597.5M703.6 618.8V622.8H707.6M823.6 622.8H827.6V618.8M827.6 597.5V593.5H831.6M867.2 593.5H871.2V597.5M827.6 618.8V622.8H831.6M867.2 622.8H871.2V618.8M871.2 597.5V593.5H875.2M937.8 593.5H941.8V597.5M871.2 618.8V622.8H875.2M937.8 622.8H941.8V618.8M941.8 597.5V593.5H945.8M1013.5 593.5H1017.5V597.5M941.8 618.8V622.8H945.8M1013.5 622.8H1017.5V618.8M1017.5 597.5V593.5H1021.5M1090.3 593.5H1094.3V597.5M1017.5 618.8V622.8H1021.5M1090.3 622.8H1094.3V618.8M1094.3 597.5V593.5H1098.3M1177 593.5H1181V597.5M1094.3 618.8V622.8H1098.3M1177 622.8H1181V618.8M1181 597.5V593.5H1185M1310.6 593.5H1314.6V597.5M1181 618.8V622.8H1185M1310.6 622.8H1314.6V618.8M1314.6 597.5V593.5H1318.6M1353.6 593.5H1357.6V597.5M1314.6 618.8V622.8H1318.6M1353.6 622.8H1357.6V618.8M1357.6 597.5V593.5H1361.6M1380.6 593.5H1384.6V597.5M1357.6 618.8V622.8H1361.6M1380.6 622.8H1384.6V618.8M1384.6 597.5V593.5H1388.6M1451.7 593.5H1455.7V597.5M1384.6 618.8V622.8H1388.6M1451.7 622.8H1455.7V618.8M1455.7 597.5V593.5H1459.7M1504.7 593.5H1508.7V597.5M1455.7 618.8V622.8H1459.7M1504.7 622.8H1508.7V618.8M1508.7 597.5V593.5H1512.7M1576 593.5H1580V597.5M1508.7 618.8V622.8H1512.7M1576 622.8H1580V618.8M543.4 751.5V746.5H548.4M733 746.5H738V751.5M543.4 759.6V764.6H548.4M733 764.6H738V759.6M738 751.5V746.5H743M1088.2 746.5H1093.2V751.5M738 759.6V764.6H743M1088.2 764.6H1093.2V759.6M543.4 769.6V764.6H548.4M733 764.6H738V769.6M543.4 777.2V782.2H548.4M733 782.2H738V777.2M738 769.6V764.6H743M1088.2 764.6H1093.2V769.6M738 777.2V782.2H743M1088.2 782.2H1093.2V777.2M543.4 787.2V782.2H548.4M733 782.2H738V787.2M543.4 794.4V799.4H548.4M733 799.4H738V794.4M738 787.2V782.2H743M1088.2 782.2H1093.2V787.2M738 794.4V799.4H743M1088.2 799.4H1093.2V794.4M543.4 804.4V799.4H548.4M733 799.4H738V804.4M543.4 812V817H548.4M733 817H738V812M738 804.4V799.4H743M1088.2 799.4H1093.2V804.4M738 812V817H743M1088.2 817H1093.2V812M1349.5 760V755H1354.5M1695 755H1700V760M1349.5 768V773H1354.5M1695 773H1700V768M1349.5 778V773H1354.5M1695 773H1700V778M1349.5 786V791H1354.5M1695 791H1700V786M1349.5 796V791H1354.5M1695 791H1700V796M1349.5 804V809H1354.5M1695 809H1700V804" fill="none" stroke="#1c1c1c" stroke-width="1.100" transform="translate(0 0.7)"/></svg>
</div></div>
<div class="a" style="left:1524px;top:153px;width:19px;height:671px;background:#fbfbfb"></div>
<div class="a" style="left:460px;top:804.700px;width:1083px;height:19.300px;background:#fbfbfb"></div>
<svg style="left:1526px;top:165px" width="14" height="8" viewBox="0 0 14 8"><path d="M0 8l7-8 7 8z" fill="#8c8c8c"/></svg>
<div class="a" style="left:1528px;top:181.700px;width:11px;height:341.600px;border-radius:5.500px;background:#8c8c8c"></div>
<svg style="left:1526px;top:786px" width="14" height="8" viewBox="0 0 14 8"><path d="M0 0l7 8 7-8z" fill="#8c8c8c"/></svg>
<svg style="left:469px;top:808px" width="8" height="13" viewBox="0 0 8 13"><path d="M8 0L0 6.500 8 13z" fill="#8c8c8c"/></svg>
<div class="a" style="left:488px;top:809.300px;width:794px;height:10.800px;border-radius:5.400px;background:#8c8c8c"></div>
<svg style="left:1506px;top:808px" width="8" height="13" viewBox="0 0 8 13"><path d="M0 0l8 6.500L0 13z" fill="#8c8c8c"/></svg>
<!-- s_status -->
<div class="a" style="left:7px;top:824px;width:1536px;height:35px;background:#0b6333"></div>
<div class="st" style="left:27px">Centímetros</div>
<svg style="left:104px;top:841px" width="7" height="4" viewBox="0 0 8 4"><path d="M0 4h8l-4-4z" fill="#fff"/></svg>
<div class="sv" style="left:132px"></div>
<div class="sv" style="left:322.5px"></div>
<div class="sv" style="left:398px"></div>
<div class="sv" style="left:657px"></div>
<div class="sv" style="left:1151.5px"></div>
<div class="sv" style="left:1277.5px"></div>
<svg style="left:147px;top:837.500px" width="6" height="10" viewBox="0 0 6 10"><path d="M0 0l6 5-6 5z" fill="#fff"/></svg>
<div class="st" style="left:161.500px">Verificar se há problemas</div>
<div class="st" style="left:338px">Image1</div>
<div class="st" style="left:413px">X:0.80 Y:0.80 Largura:2.80 Altura:2.60</div>
<svg style="left:1166px;top:835px" width="18" height="16" viewBox="0 0 18 16"><rect x="0.700" y="0.700" width="16.600" height="14.600" fill="none" stroke="#fff" stroke-width="1.400"/><path d="M6 5.500h6M4 8h10M6 10.500h6" stroke="#fff" stroke-width="1" shape-rendering="crispEdges"/><path d="M2 8l2.800-2.500v5zM16 8l-2.800-2.500v5z" fill="#fff"/></svg>
<svg style="left:1205px;top:835px" width="18" height="16" viewBox="0 0 18 16"><rect x="0.700" y="0.700" width="16.600" height="14.600" fill="none" stroke="#fff" stroke-width="1.400"/><path d="M5 6.500h8M5 8.500h8M5 10.500h8" stroke="#fff" stroke-width="1" shape-rendering="crispEdges"/><path d="M9 2.200l2.600 2.800h-5.200zM9 14.800l2.600-2.800h-5.200z" fill="#fff"/></svg>
<svg style="left:1245px;top:835px" width="18" height="16" viewBox="0 0 18 16"><rect x="0.700" y="0.700" width="16.600" height="14.600" fill="none" stroke="#fff" stroke-width="1.400"/></svg>
<div class="t" style="left:1248.500px;top:840px;font-size:7px;font-weight:bold;color:#fff;letter-spacing:-.2px">100</div>
<div class="a" style="left:1296px;top:843px;width:10px;height:2.400px;background:#fff"></div>
<div class="a" style="left:1326px;top:843.500px;width:113px;height:1.200px;background:#fff"></div>
<div class="a" style="left:1377px;top:836px;width:5px;height:17px;background:#fff"></div>
<div class="a" style="left:1459px;top:843px;width:10px;height:2.400px;background:#fff"></div><div class="a" style="left:1462.800px;top:839.200px;width:2.400px;height:10px;background:#fff"></div>
<div class="st" style="left:1494.500px">100%</div>
<!-- s_annot -->
<svg style="left:0;top:0;pointer-events:none" width="1569" height="859" viewBox="0 0 1569 859">
<path d="M43.500 293.400L62.500 261" stroke="#fe0000" stroke-width="4" stroke-linecap="round" fill="none"/>
<path d="M71.400 246.200L56.500 259.900L66.800 265.500z" fill="#fe0000"/>
<path d="M75.500 839L146 813.500" stroke="#fe0000" stroke-width="3.600" stroke-linecap="round" fill="none"/>
<path d="M161.500 807.600L141.400 809.300L146.200 819.700z" fill="#fe0000"/>
<path d="M165.500 813.500C185 813.300 205 812.900 225.200 812.300" stroke="#fe0000" stroke-width="3.800" stroke-linecap="round" fill="none"/>
</svg>
</body></html>
